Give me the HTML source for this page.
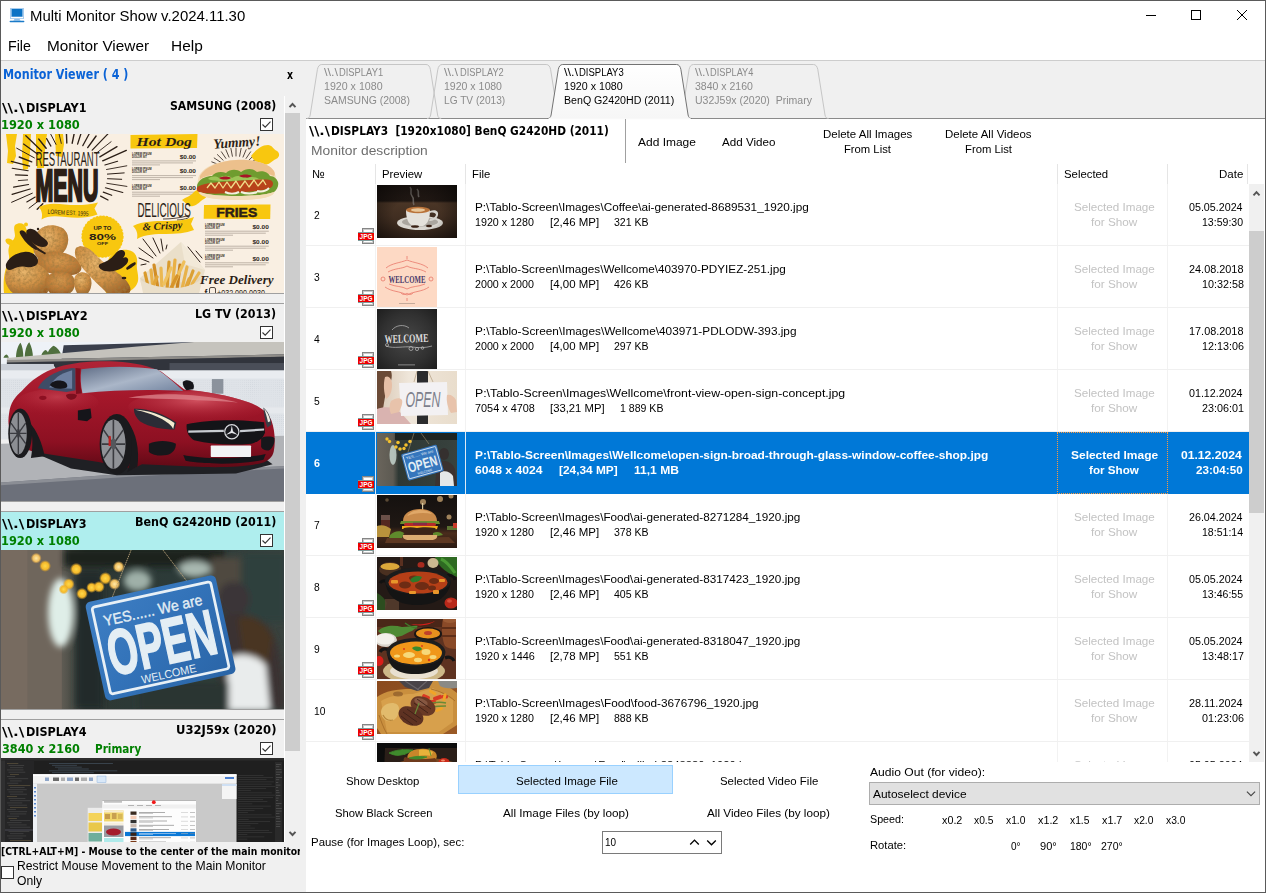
<!DOCTYPE html>
<html lang="en"><head><meta charset="utf-8"><title>Multi Monitor Show v.2024.11.30</title>
<style>
html,body{margin:0;padding:0}
body{width:1266px;height:893px;overflow:hidden;background:#fff;position:relative;font-family:"Liberation Sans",sans-serif;font-size:11.7px;color:#000}
section,header,nav,aside,main,footer,article{display:block;position:static}
div,svg{position:absolute;box-sizing:border-box}
.t{position:absolute;white-space:pre;line-height:20px;transform-origin:0 0;display:block}
.clip{overflow:hidden}
.cb{background:#fff;border:1px solid #333}
.hl{background:#f0f0f0}
</style></head><body>

<div style="left:0px;top:60px;width:1266px;height:833px;background:#f0f0f0"></div>
<div style="left:0px;top:60px;width:1266px;height:1px;background:#cdcdcd"></div>
<div style="left:306px;top:119px;width:960px;height:774px;background:#fff"></div>
<header>
<svg style="left:9px;top:7px" width="16" height="16" viewBox="0 0 16 16"><rect x="1" y="1" width="14" height="11" fill="#a9cdee"/><rect x="2.7" y="2" width="10.6" height="7.7" fill="#0b73c5"/><rect x="2" y="9.9" width="12" height="1.2" fill="#fff"/><path d="M5.5 12h5l1.2 1.8h-7.400z" fill="#8fc0ea"/><rect x="0.600" y="13.700" width="14.800" height="1.500" rx="0.700" fill="#1a7ac8"/></svg>
<span class="t" style="left:29.78px;top:6.00px;font-size:14.7px;transform:scaleX(1.0164);">Multi Monitor Show v.2024.11.30</span>
<svg style="left:1140px;top:5px" width="115" height="22" viewBox="1140 5 115 22" fill="none" stroke="#000" stroke-width="1"><path d="M1146 15.5h10"/><rect x="1191.5" y="10.5" width="9" height="9"/><path d="M1237 10l10 10M1247 10l-10 10"/></svg>
</header>
<nav><span class="t" style="left:7.63px;top:36.00px;font-size:14.7px;transform:scaleX(0.9690);">File</span>
<span class="t" style="left:46.56px;top:36.00px;font-size:14.7px;transform:scaleX(1.0445);">Monitor Viewer</span>
<span class="t" style="left:170.95px;top:36.00px;font-size:14.7px;transform:scaleX(1.0503);">Help</span></nav>
<aside>
<span class="t" style="left:2.52px;top:64.00px;font-size:14px;font-weight:bold;font-family:'DejaVu Sans', 'Liberation Sans', sans-serif;font-stretch:condensed;color:#0b63d6;transform:scaleX(0.8840);">Monitor Viewer ( 4 )</span>
<span class="t" style="left:286.50px;top:65.00px;font-size:13px;font-weight:bold;font-family:'DejaVu Sans', 'Liberation Sans', sans-serif;font-stretch:condensed;transform:scaleX(0.8000);">x</span>
<div style="left:284px;top:96px;width:1px;height:746px;background:#fff"></div>
<div style="left:285px;top:96px;width:15px;height:746px;background:#f0f0f0"></div>
<div style="left:285px;top:113px;width:15px;height:638px;background:#cdcdcd"></div>
<svg style="left:285px;top:96px" width="15" height="17" viewBox="285 96 15 17"><path d="M289.5 107.2l3-3.2l3 3.2" fill="none" stroke="#555" stroke-width="1.9"/></svg>
<svg style="left:285px;top:825px" width="15" height="17" viewBox="285 825 15 17"><path d="M289.5 831.8l3 3.200l3-3.200" fill="none" stroke="#555" stroke-width="1.9"/></svg>
<div class="clip" style="left:0;top:96px;width:284px;height:746px">
<section>
<div style="left:0px;top:-1px;width:284px;height:199px;border-top:1px solid #a0a0a0;border-bottom:1px solid #a0a0a0;background:#f0f0f0"></div>
<svg style="left:1px;top:38px" width="283" height="159" viewBox="0 0 283 159" preserveAspectRatio="none"><rect width="283" height="159" fill="#f9efe2"/><g fill="#f8c70f"><path d="M5 0h11l-2 12l1 10l-3 8l-6-1l1-12z"/><path d="M22 0h8l-1 18l-2 17l-5 1l-1-14z"/><path d="M35 0h11l-2 14l-1 20h-7l-1-16z"/><path d="M54 0h8l1 10l-2 13l-6-1z"/></g><g stroke="#2b1e16" stroke-linecap="round" fill="none"><path d="M106.5 44.7L120.7 45.3" stroke-width="1"/><path d="M105.8 49.3L125.9 52.4" stroke-width="0.9"/><path d="M104.4 53.8L121.8 58.5" stroke-width="1.1"/><path d="M102.3 58.1L110.7 61.3" stroke-width="1.2"/><path d="M99.6 62.1L107 66" stroke-width="1.2"/><path d="M41.8 69.8L36.2 75.3" stroke-width="1.4"/><path d="M37.8 66.7L28 74.2" stroke-width="1"/><path d="M34.2 63.1L25.8 67.9" stroke-width="1.1"/><path d="M31.3 59.2L10.6 68.3" stroke-width="1"/><path d="M29.1 55L11.1 60.4" stroke-width="1.3"/><path d="M27.5 50.5L12.6 53.2" stroke-width="1.2"/><path d="M26.6 45.9L17.3 46.6" stroke-width="0.9"/><path d="M26.5 41.3L14.5 40.8" stroke-width="1.3"/><path d="M27.2 36.7L11.2 34.3" stroke-width="1.1"/><path d="M28.6 32.2L10.3 27.3" stroke-width="1.2"/><path d="M30.7 27.9L18.2 23" stroke-width="1.4"/><path d="M33.4 23.9L15.7 14.2" stroke-width="1"/><path d="M36.8 20.3L22.6 10" stroke-width="1.2"/><path d="M40.7 17L24.8 1.7" stroke-width="1.3"/><path d="M45.1 14.3L37.8 5.1" stroke-width="1.5"/><path d="M49.9 12.1L45.6 4.6" stroke-width="1.2"/><path d="M55 10.4L48.6 -2" stroke-width="1"/><path d="M60.3 9.4L57.6 -2" stroke-width="0.9"/><path d="M65.8 9L65.4 -2" stroke-width="1.4"/><path d="M71.2 9.2L73.5 -2" stroke-width="1.4"/><path d="M76.6 10.1L80.1 -0.8" stroke-width="1.3"/><path d="M81.8 11.6L89.2 -2" stroke-width="1.2"/><path d="M86.7 13.6L95.1 2" stroke-width="1.4"/><path d="M91.2 16.2L107.2 -0.4" stroke-width="1.2"/><path d="M95.2 19.3L110.1 7.7" stroke-width="0.9"/><path d="M98.8 22.9L116 12.6" stroke-width="1.3"/><path d="M101.7 26.8L125.3 16.4" stroke-width="1.4"/><path d="M103.9 31L116.6 27.2" stroke-width="1.1"/><path d="M105.5 35.5L125.8 31.8" stroke-width="0.9"/><path d="M106.4 40.1L123.2 38.9" stroke-width="1"/></g><g font-family="Liberation Sans, sans-serif" fill="#2b1e16"><text transform="translate(34.5 31.8) scale(1 1.75)" font-size="11.8" textLength="64" lengthAdjust="spacingAndGlyphs">RESTAURANT</text><text transform="translate(34.6 67.3) scale(1 2.05)" font-size="21.8" font-weight="bold" stroke="#2b1e16" stroke-width="1.3" textLength="62.8" lengthAdjust="spacingAndGlyphs">MENU</text></g><path d="M38 73c8-4 16-3.5 26-2.5s22 1 33-2l-3.5 6l3 6c-10 4-22 3.5-32 2.5s-18-1.5-24 2.5c1-4 1-8-2.5-12.5z" fill="#f8c70f"/><text x="46.5" y="80.8" font-family="Liberation Sans, sans-serif" font-size="6.2" fill="#2b1e16" textLength="41" lengthAdjust="spacingAndGlyphs" transform="rotate(3 67 79)">LOREM EST. 1995</text><g fill="#f8c70f"><path d="M14 91c4-3 10-2 11 3c1 5 8 8 9 16c1 9-4 14-8 22c-3 7 1 14 2 27h-25c-1-10 0-22 4-30c3-6-1-10 1-16c1-5 5-6 6-11c0-4-2-8 0-11z"/><circle cx="25" cy="90.5" r="2"/><ellipse cx="9" cy="108" rx="5" ry="3" transform="rotate(30 9 108)"/><path d="M108 124c4-6 12-9 19-8c7 1 10 7 9 14c-1 6 2 10 1 17c-1 5-5 9-12 12h-20c-3-9-2-25 3-35z"/><circle cx="101.5" cy="102.6" r="20.6"/></g><circle cx="101.5" cy="102.6" r="20.3" fill="none" stroke="#f8c70f" stroke-width="1.6" stroke-dasharray="2.2 1.2"/><g font-family="Liberation Sans, sans-serif" font-weight="bold" fill="#2b1e16" text-anchor="middle"><text x="101.5" y="96" font-size="4.6" textLength="18" lengthAdjust="spacingAndGlyphs">UP TO</text><text x="101.5" y="106" font-size="9.6" textLength="27" lengthAdjust="spacingAndGlyphs">80%</text><text x="101.5" y="111.4" font-size="4.2" textLength="11" lengthAdjust="spacingAndGlyphs">OFF</text></g><defs><radialGradient id="ck" cx="0.4" cy="0.35" r="0.8"><stop offset="0" stop-color="#e8b56c"/><stop offset="0.55" stop-color="#cf8f45"/><stop offset="1" stop-color="#955a24"/></radialGradient><radialGradient id="ck2" cx="0.5" cy="0.4" r="0.8"><stop offset="0" stop-color="#d99a50"/><stop offset="0.6" stop-color="#b87634"/><stop offset="1" stop-color="#7e4a1e"/></radialGradient><filter id="ckf" x="0" y="0" width="1" height="1"><feTurbulence type="fractalNoise" baseFrequency="0.35" numOctaves="3" seed="4" result="n"/><feColorMatrix in="n" type="matrix" values="0 0 0 0 0.35  0 0 0 0 0.2  0 0 0 0 0.05  1.6 0 0 0 -0.55" result="d"/><feComposite in="d" in2="SourceGraphic" operator="in" result="dd"/><feMerge><feMergeNode in="SourceGraphic"/><feMergeNode in="dd"/></feMerge></filter></defs><g filter="url(#ckf)"><path d="M38 96c5-5 14-6 21-3c6 2 9 8 8 15c-1 7-5 12-11 15c-6 3-14 5-19 1c-5-4-6-12-4-18c1-4 2-7 5-10z" fill="url(#ck)"/><path d="M40 121c8-5 20-4 29 0c7 3 13 9 11 15c-2 5-12 6-21 5c-8-1-18-3-22-8c-3-4-1-9 3-12z" fill="url(#ck2)"/><path d="M75 114c5-4 12-1 17 4c6 6 14 14 22 19c7 5 13 10 15 16c1 3 0 5-1 6h-22c-6-6-14-13-21-21c-6-7-14-16-10-24z" fill="url(#ck)"/><path d="M8 133c6-6 17-7 26-4c8 3 15 9 16 17c0 5-2 10-4 13h-34c-5-4-8-10-8-16c0-4 1-7 4-10z" fill="url(#ck)"/><path d="M48 141c6-4 15-4 21-1c5 3 6 9 4 14c-1 2-2 4-4 5h-20c-3-3-5-7-5-11c0-3 1-5 4-7z" fill="url(#ck2)"/><path d="M76 140c4-3 9-2 12 1c3 4 3 10 1 15l-2 3h-11c-2-4-3-8-3-12c0-3 1-5 3-7z" fill="url(#ck)"/></g><g fill="#2b1e16"><path d="M19 97c3-2 6 1 8 5c3 5 7 9 11 13l-3 1c-6-3-11-8-14-13c-2-3-3-5-2-6z"/><path d="M26 96c4-3 9 0 12 4c3 4 8 5 9 9c0 4-5 5-10 3c-5-2-9-6-11-10c-1-3-1-5 0-6z"/><path d="M5 130c3-7 10-11 18-12c8-1 14 4 14 9c0 5-6 7-12 6c-5-1-9 0-13 2c-4 2-8 1-7-5z"/><path d="M37 114l8 5l-1 1.5l-8-4.5z"/><circle cx="37" cy="95" r="1.2"/><path d="M99 130c6-2 11-5 15-10c3-4 7-5 9-3c2 2 1 5-1 7c2-1 4-1 5 1c1 3-2 6-6 9c-5 3-12 4-17 3c-5-1-8-5-5-7z"/><path d="M125 134c3-3 6-5 9-6c1 1 1 2 0 3c-3 2-5 4-8 5z"/><ellipse cx="123" cy="144" rx="2.4" ry="1.2"/></g><path d="M129.5 1l67-1l-0.5 14l-66.5 0.5z" fill="#f8c70f"/><text x="135.5" y="11.8" font-family="Liberation Serif, serif" font-style="italic" font-weight="bold" font-size="13.5" fill="#2b1e16" textLength="55.5" lengthAdjust="spacingAndGlyphs">Hot Dog</text><text x="131" y="21.2" font-family="Liberation Sans, sans-serif" font-weight="bold" font-size="3" fill="#2b1e16" textLength="19.5" lengthAdjust="spacingAndGlyphs">LOREM IPSUM</text><text x="131" y="24.2" font-family="Liberation Sans, sans-serif" font-weight="bold" font-size="3" fill="#2b1e16" textLength="15" lengthAdjust="spacingAndGlyphs">DOLOR SIT</text><text x="195" y="24.7" font-family="Liberation Sans, sans-serif" font-weight="bold" font-size="5.6" fill="#2b1e16" text-anchor="end" textLength="16.3" lengthAdjust="spacingAndGlyphs">$0.00</text><path d="M131 26.9h64M131 28.9h61M131 30.9h28" stroke="#b9aea2" stroke-width="0.9" fill="none"/><text x="131" y="36" font-family="Liberation Sans, sans-serif" font-weight="bold" font-size="3" fill="#2b1e16" textLength="19.5" lengthAdjust="spacingAndGlyphs">LOREM IPSUM</text><text x="131" y="39" font-family="Liberation Sans, sans-serif" font-weight="bold" font-size="3" fill="#2b1e16" textLength="15" lengthAdjust="spacingAndGlyphs">DOLOR SIT</text><text x="195" y="39.4" font-family="Liberation Sans, sans-serif" font-weight="bold" font-size="5.6" fill="#2b1e16" text-anchor="end" textLength="16.3" lengthAdjust="spacingAndGlyphs">$0.00</text><path d="M131 41.6h64M131 43.6h61M131 45.6h28" stroke="#b9aea2" stroke-width="0.9" fill="none"/><text x="131" y="52.6" font-family="Liberation Sans, sans-serif" font-weight="bold" font-size="3" fill="#2b1e16" textLength="19.5" lengthAdjust="spacingAndGlyphs">LOREM IPSUM</text><text x="131" y="55.6" font-family="Liberation Sans, sans-serif" font-weight="bold" font-size="3" fill="#2b1e16" textLength="15" lengthAdjust="spacingAndGlyphs">DOLOR SIT</text><text x="195" y="56" font-family="Liberation Sans, sans-serif" font-weight="bold" font-size="5.6" fill="#2b1e16" text-anchor="end" textLength="16.3" lengthAdjust="spacingAndGlyphs">$0.00</text><path d="M131 58.2h64M131 60.2h61M131 62.2h28" stroke="#b9aea2" stroke-width="0.9" fill="none"/><text x="204" y="91.6" font-family="Liberation Sans, sans-serif" font-weight="bold" font-size="3" fill="#2b1e16" textLength="19.5" lengthAdjust="spacingAndGlyphs">LOREM IPSUM</text><text x="204" y="94.6" font-family="Liberation Sans, sans-serif" font-weight="bold" font-size="3" fill="#2b1e16" textLength="15" lengthAdjust="spacingAndGlyphs">DOLOR SIT</text><text x="267.8" y="95" font-family="Liberation Sans, sans-serif" font-weight="bold" font-size="5.6" fill="#2b1e16" text-anchor="end" textLength="16.3" lengthAdjust="spacingAndGlyphs">$0.00</text><path d="M204 97.2h63.8M204 99.2h60.8M204 101.2h28" stroke="#b9aea2" stroke-width="0.9" fill="none"/><text x="204" y="106.6" font-family="Liberation Sans, sans-serif" font-weight="bold" font-size="3" fill="#2b1e16" textLength="19.5" lengthAdjust="spacingAndGlyphs">LOREM IPSUM</text><text x="204" y="109.6" font-family="Liberation Sans, sans-serif" font-weight="bold" font-size="3" fill="#2b1e16" textLength="15" lengthAdjust="spacingAndGlyphs">DOLOR SIT</text><text x="267.8" y="110" font-family="Liberation Sans, sans-serif" font-weight="bold" font-size="5.6" fill="#2b1e16" text-anchor="end" textLength="16.3" lengthAdjust="spacingAndGlyphs">$0.00</text><path d="M204 112.2h63.8M204 114.2h60.8M204 116.2h28" stroke="#b9aea2" stroke-width="0.9" fill="none"/><text x="204" y="123.2" font-family="Liberation Sans, sans-serif" font-weight="bold" font-size="3" fill="#2b1e16" textLength="19.5" lengthAdjust="spacingAndGlyphs">LOREM IPSUM</text><text x="204" y="126.2" font-family="Liberation Sans, sans-serif" font-weight="bold" font-size="3" fill="#2b1e16" textLength="15" lengthAdjust="spacingAndGlyphs">DOLOR SIT</text><text x="267.8" y="126.6" font-family="Liberation Sans, sans-serif" font-weight="bold" font-size="5.6" fill="#2b1e16" text-anchor="end" textLength="16.3" lengthAdjust="spacingAndGlyphs">$0.00</text><path d="M204 128.8h63.8M204 130.8h60.8M204 132.8h28" stroke="#b9aea2" stroke-width="0.9" fill="none"/><text x="212.5" y="13" font-family="Liberation Serif, serif" font-style="italic" font-weight="bold" font-size="14" fill="#2b1e16" textLength="47" lengthAdjust="spacingAndGlyphs" transform="rotate(-4 236 10)">Yummy!</text><g stroke="#2b1e16" stroke-width="0.8" stroke-linecap="round"><path d="M218.3 30.8L210.8 27.9"/><path d="M219.9 28.4L213.2 24"/><path d="M222.1 26.2L216.4 20.6"/><path d="M224.9 24.4L220.4 17.8"/><path d="M228 23.1L224.9 15.7"/><path d="M231.4 22.3L229.9 14.4"/><path d="M235 22L235 14"/><path d="M238.6 22.3L240.1 14.4"/><path d="M242 23.1L245.1 15.7"/><path d="M245.1 24.4L249.6 17.8"/><path d="M247.9 26.2L253.6 20.6"/><path d="M250.1 28.4L256.8 24"/><path d="M251.7 30.8L259.2 27.9"/></g><path d="M250 22c4-5 10-11 17-11c4 0 5 4 9 6c3 2 3 6-1 8c-4 2-7 6-12 6c-5 0-10-4-13-9z" fill="#f8c70f"/><path d="M181 66c4-3 9-4 12-8c3-3 8-4 12-2c3 2 2 7-2 9c-4 2-6 6-11 7c-4 1-6-2-11-6z" fill="#f8c70f"/><path d="M197 46c1-11 17-19 38-20c21-1 37 5 39 14c2 7 2 14-1 19c-3 5-20 7-38 7c-18 0-34-2-37-7c-2-4-2-8-1-13z" fill="#f3dcb8"/><path d="M199 42c5-9 19-15 36-16c19-1 34 4 38 11c1 2 1 4 0 5c-8-3-22-5-38-4c-16 1-29 3-36 7z" fill="#ecc08c"/><path d="M197 49c3-5 9-7 14-7c3-4 9-5 14-3c4-4 11-4 15-1c5-4 12-4 16 0c5-2 11 0 13 4c4 0 7 3 8 6c1 4-1 8-4 10c-8 3-22 4-38 4c-16 0-30-1-36-4c-3-2-4-6-2-9z" fill="#6f9c2f"/><path d="M207 45c3-3 8-3 11-1c4-3 10-3 13 0c5-3 11-3 15 0c4-2 9-1 12 1c3 0 6 1 8 3c-10-2-24-2-36-1c-10 0-18 0-23-2z" fill="#9cc456"/><path d="M218 44c4-2 9-2 12 0c-3 2-9 2-12 0zM238 42c4-2 9-2 13 0c-4 2-9 2-13 0z" fill="#a81426"/><path d="M198 52c6-3 20-4 37-5c15-1 28-2 34-1c4 1 4 6 0 8c-8 3-21 4-37 5c-15 1-28 1-34-1c-3-1-3-5 0-6z" fill="#b8431a"/><path d="M206 54l4-5l4 5l4-6l4 6l4-6l4 6l5-7l4 7l5-7l4 6l5-7l4 6l5-6l3 5" fill="none" stroke="#f1de8a" stroke-width="1.3" stroke-linejoin="round"/><path d="M224 58c4 2 10 2 14 0M240 58c5 2 12 2 16 0M256 57c4 1 9 0 12-3" fill="none" stroke="#f4f0e0" stroke-width="2"/><path d="M199 58c8 3 22 4 37 4c15 0 29-1 37-4c0 5-15 8-37 8c-22 0-37-3-37-8z" fill="#f3dcb8"/><text transform="translate(136.4 83.4) scale(1 1.55)" font-family="Liberation Sans, sans-serif" font-size="12.6" fill="#2b1e16" textLength="53.4" lengthAdjust="spacingAndGlyphs">DELICIOUS</text><path d="M162 85c8 0 16-1 24-3c2-0.5 3 1 1 2c-3 1-7 2-11 2" fill="none" stroke="#2b1e16" stroke-width="0.8"/><path d="M132 92c10-5 22-5 34-5c10 0 19-1 27-4l-3 7l3 6c-8 3-18 4-28 4c-10 0-20 0-29 5c1-5 0-9-4-13z" fill="#f8c70f"/><text x="141.5" y="95.5" font-family="Liberation Serif, serif" font-style="italic" font-weight="bold" font-size="10.5" fill="#2b1e16" textLength="40" lengthAdjust="spacingAndGlyphs" transform="rotate(-3 160 93)">&amp; Crispy</text><path d="M203 71l66.5-0.5l-0.3 14.5l-66.5-0.3z" fill="#f8c70f"/><text x="215.2" y="82.7" font-family="Liberation Sans, sans-serif" font-weight="bold" font-size="13.2" fill="#2b1e16" stroke="#2b1e16" stroke-width="0.5" textLength="41" lengthAdjust="spacingAndGlyphs">FRIES</text><g stroke="#2b1e16" stroke-width="1" stroke-linecap="round"><path d="M142 105L155 122"/><path d="M152 104L159 119"/><path d="M160 105L162 117"/><path d="M166 111L165 115"/><path d="M138 114L152 124"/><path d="M138 124L148 128"/><path d="M140 131L145 130"/><path d="M187 113L199 128"/><path d="M195 117L201 124"/></g><path d="M180 108l24 28l-6 23h-56l-3-15z" fill="#eadfca"/><path d="M180 108l24 28l-20 -6z" fill="#f2e9d8"/><path d="M139 144l8 15h48l5-17c-12 8-38 10-61 2z" fill="#e4d6bc"/><g stroke-linecap="round" stroke-width="3.2"><path d="M147 152L144 139" stroke="#d99a2c"/><path d="M152 154L150 136" stroke="#e8b24a"/><path d="M157 155L153 131" stroke="#d28e26"/><path d="M161 156L160 134" stroke="#ebb851"/><path d="M166 156L168 128" stroke="#d99a2c"/><path d="M171 157L174 126" stroke="#e9b046"/><path d="M176 156L179 131" stroke="#c9821f"/><path d="M181 155L186 133" stroke="#e8b24a"/><path d="M186 153L192 137" stroke="#dba033"/><path d="M191 150L198 139" stroke="#e9b44c"/><path d="M163 150L170 134" stroke="#f0c260"/><path d="M173 150L183 128" stroke="#efbf5a"/><path d="M150 157L156 143" stroke="#e2a63a"/><path d="M168 158L176 142" stroke="#d6932a"/><path d="M183 158L188 145" stroke="#e2a63a"/></g><path d="M139 146c10 5 22 8 34 8c10 0 20-3 28-9l-3 14h-55z" fill="#eadfca"/><text x="199" y="150" font-family="Liberation Serif, serif" font-style="italic" font-weight="bold" font-size="13" fill="#2b1e16" textLength="73.5" lengthAdjust="spacingAndGlyphs">Free Delivery</text><text x="216" y="162" font-family="Liberation Sans, sans-serif" font-size="8.5" fill="#2b1e16" textLength="48" lengthAdjust="spacingAndGlyphs">+032 090 0030</text><text x="203.5" y="161.5" font-family="Liberation Sans, sans-serif" font-weight="bold" font-size="8.5" fill="#2b1e16">f</text><rect x="208.5" y="153.5" width="6" height="7" rx="1.5" fill="none" stroke="#2b1e16" stroke-width="0.8"/></svg>
<svg style="left:260px;top:22px" width="13" height="13" viewBox="0 0 13 13"><rect x="0.5" y="0.5" width="12" height="12" fill="#fff" stroke="#333"/><path d="M2.5 6.5l2.7 2.7l5.3-5.6" fill="none" stroke="#333" stroke-width="1.1"/></svg>
</section>
<section>
<div style="left:0px;top:207px;width:284px;height:199px;border-top:1px solid #a0a0a0;border-bottom:1px solid #a0a0a0;background:#f0f0f0"></div>
<svg style="left:1px;top:246px" width="283" height="159" viewBox="0 0 283 159" preserveAspectRatio="none"><defs><linearGradient id="cg" x1="0" y1="0" x2="0" y2="1"><stop offset="0" stop-color="#b9babd"/><stop offset="0.45" stop-color="#a6a8ad"/><stop offset="0.5" stop-color="#7b7f88"/><stop offset="1" stop-color="#666a74"/></linearGradient><linearGradient id="cb" x1="0" y1="0" x2="0" y2="1"><stop offset="0" stop-color="#b02436"/><stop offset="0.35" stop-color="#a3172a"/><stop offset="0.75" stop-color="#8d1022"/><stop offset="1" stop-color="#5e0915"/></linearGradient><linearGradient id="cw" x1="0" y1="0" x2="1" y2="1"><stop offset="0" stop-color="#5f6d86"/><stop offset="0.5" stop-color="#aab6c8"/><stop offset="1" stop-color="#6d7f9c"/></linearGradient><radialGradient id="ch" cx="0.5" cy="0.3" r="0.7"><stop offset="0" stop-color="#d0505e"/><stop offset="1" stop-color="#a3172a" stop-opacity="0"/></radialGradient><pattern id="dots" width="9" height="9" patternUnits="userSpaceOnUse"><circle cx="4.5" cy="4.5" r="1.3" fill="#c6ccd4"/></pattern><clipPath id="cbody"><path d="M40 335c5-40 25-70 55-95c40-45 90-85 160-105c70-22 170-28 250-24c80 4 150 20 200 45c40 30 70 55 100 78c90 8 190 25 280 55c50 18 85 45 100 80c15 40 18 95 10 135c-5 25-25 40-45 48c-60 18-150 22-260 20l-270-12l-40 20l-150-30l-260-40c-60-10-110-40-125-90c-10-30-10-55-5-85z"/></clipPath></defs><g transform="scale(0.22907) translate(-4.37 -26.2)"><rect x="0" y="20" width="1250" height="200" fill="#eef2f7"/><g fill="#4f6f3e"><path d="M70 95c0-25 8-55 20-65c8 15 12 40 12 65zM108 95c0-28 8-58 20-68c10 18 16 45 16 68zM180 85c5-14 12-22 20-24c8 4 12 14 14 24zM205 85c4-20 16-36 30-42c16 8 28 24 34 42zM15 95c4-10 10-14 14-14c4 2 8 8 10 14z"/></g><path d="M278 40l580-14h400v140h-1000z" fill="#3a3f4c"/><path d="M30 96l250-22l320-28l250-20h400v54l-1220 24z" fill="#c5c3bd"/><path d="M30 104l1220-24v10l-1220 30z" fill="#8e8c88"/><path d="M30 116l1220-26v75h-1220z" fill="#31343c"/><rect x="740" y="118" width="510" height="42" fill="#4a4e58"/><path d="M0 122h230l20 30h1000v300h-1250z" fill="#dfe3e8"/><rect x="0" y="122" width="235" height="30" fill="#c9ced6"/><rect x="0" y="150" width="1250" height="36" fill="#e9ecf0"/><rect x="0" y="192" width="1250" height="120" fill="url(#dots)"/><rect x="0" y="340" width="1250" height="90" fill="url(#dots)"/><rect x="0" y="312" width="1250" height="26" fill="#e6e9ed"/><rect x="925" y="188" width="50" height="64" fill="#8b929c"/><path d="M0 470l1250-35v300h-1250z" fill="#b1b3b7"/><path d="M0 640l600-42l650-30v170h-1250z" fill="#6c707a"/><path d="M0 640l600-42l650-30v10l-650 34l-600 40z" fill="#8b8e95"/><path d="M150 510l1000 20l40 30l-160 40l-520 8l-200-30z" fill="#1f2024"/><path d="M40 335c5-40 25-70 55-95c40-45 90-85 160-105c70-22 170-28 250-24c80 4 150 20 200 45c40 30 70 55 100 78c90 8 190 25 280 55c50 18 85 45 100 80c15 40 18 95 10 135c-5 25-25 40-45 48c-60 18-150 22-260 20l-270-12l-40 20l-150-30l-260-40c-60-10-110-40-125-90c-10-30-10-55-5-85z" fill="url(#cb)"/><g clip-path="url(#cbody)"><ellipse cx="860" cy="310" rx="300" ry="70" fill="url(#ch)"/><ellipse cx="250" cy="290" rx="180" ry="60" fill="url(#ch)" opacity="0.6"/><path d="M560 270c120-25 300-20 480 20c-150-10-320-15-480-20z" fill="#e08a92" opacity="0.7"/></g><path d="M165 228c20-40 70-75 150-88l15 2v95l-40 8z" fill="#3e4c66"/><path d="M215 225c15-35 45-60 100-75v80z" fill="#6c7fa0"/><path d="M355 145c100-15 230-15 330 0c45 30 85 65 115 95c-140-8-300-5-440 10c-8-35-10-70-5-105z" fill="url(#cw)"/><path d="M330 140l22 2c-5 38-3 72 5 108l-25 3z" fill="#7c0f1e"/><path d="M218 215c5-15 25-22 50-20c20 2 28 15 25 28c-10 10-55 12-75 -8z" fill="#15151a"/><path d="M288 258c10-8 35-8 48 0c-2 15-15 22-28 20c-12-2-20-10-20-20z" fill="#7c0f1e"/><path d="M798 200c10-10 30-10 42 2c8 10 8 22 4 30l-30 5c-10-10-18-22-16-37z" fill="#15151a"/><path d="M340 325l55-8l5 40l-20 15l-40-5z" fill="#15151a"/><ellipse cx="187" cy="270" rx="16" ry="9" fill="#8d1022"/><path d="M585 318c50-5 130 20 185 60l-8 30c-50 0-110-10-150-35c-18-15-28-35-27-55z" fill="#2a2c36"/><path d="M590 322c50 0 120 22 172 58l-6 26c-10-30-90-70-166-84z" fill="#f3ead0"/><path d="M1150 312c18 15 32 40 35 75l-18 12c-10-25-15-55-17-87z" fill="#3a3c46"/><path d="M1152 316c14 14 24 32 28 56l-10 5c-4-22-10-42-18-61z" fill="#f0ece0"/><path d="M815 385c100-22 240-22 338-8l4 45c-10 25-30 40-60 48c-80 8-170 5-250-15c-25-15-35-40-32-70z" fill="#141418"/><path d="M822 412l155-3v10l-155 3zM1048 410l105-6v9l-105 7z" fill="#c9ccd2"/><circle cx="1012" cy="418" r="31" fill="#1b1b20" stroke="#d8dade" stroke-width="5"/><path d="M1012 390l5 26l22 16l-27-8l-27 8l22-16z" fill="#e4e6ea"/><path d="M650 470c35-15 85-15 118 0c0 25-15 42-40 50c-30 5-65 0-78-15z" fill="#17171b"/><path d="M1140 445c20-8 45-8 58 0c2 25-8 45-25 55c-15 2-28-5-33-15z" fill="#17171b"/><path d="M800 520c80 18 250 20 360-5l-10 25c-90 22-250 22-340 5z" fill="#15151a"/><rect x="920" y="478" width="176" height="50" rx="3" fill="#f2f3f5"/><ellipse cx="88" cy="425" rx="52" ry="108" fill="#1a1a1d"/><ellipse cx="80" cy="425" rx="37" ry="92" fill="#8c8e93"/><ellipse cx="80" cy="425" rx="9" ry="20" fill="#55575c"/><g stroke="#3a3b40" stroke-width="6"><path d="M80 335v180M48 380l64 90M48 470l64-90M44 425h72"/></g><path d="M130 380c30 30 55 90 65 145l-60 8c10-50 8-105-5-153z" fill="#1a1a1d"/><ellipse cx="510" cy="472" rx="75" ry="132" fill="#1a1a1d"/><ellipse cx="495" cy="472" rx="53" ry="108" fill="#909297"/><g stroke="#3a3b40" stroke-width="7"><path d="M495 366v212M452 410l86 124M452 534l86-124M444 472h102"/></g><ellipse cx="495" cy="472" rx="12" ry="24" fill="#55575c"/><path d="M474 440c4-6 8-6 10 0v40h-10z" fill="#c02020"/><path d="M560 380c35 40 50 120 40 190l-45 25c25-60 25-150 5-215z" fill="#1a1a1d"/></g></svg>
<svg style="left:260px;top:230px" width="13" height="13" viewBox="0 0 13 13"><rect x="0.5" y="0.5" width="12" height="12" fill="#fff" stroke="#333"/><path d="M2.5 6.5l2.7 2.7l5.3-5.6" fill="none" stroke="#333" stroke-width="1.1"/></svg>
</section>
<section>
<div style="left:0px;top:415px;width:284px;height:199px;border-top:1px solid #a0a0a0;border-bottom:1px solid #a0a0a0;background:#afeeee"></div>
<svg style="left:1px;top:454px" width="283" height="159" viewBox="0 0 283 159" preserveAspectRatio="none"><defs><linearGradient id="ob" x1="0" y1="0" x2="1" y2="0"><stop offset="0" stop-color="#6b655c"/><stop offset="0.22" stop-color="#5d5a52"/><stop offset="0.3" stop-color="#2e3834"/><stop offset="0.6" stop-color="#2c3a38"/><stop offset="1" stop-color="#39423e"/></linearGradient><radialGradient id="bk"><stop offset="0" stop-color="#ffd84a"/><stop offset="0.6" stop-color="#f5b92a"/><stop offset="1" stop-color="#e0a020" stop-opacity="0"/></radialGradient><radialGradient id="bk2"><stop offset="0" stop-color="#ffe9a8"/><stop offset="0.6" stop-color="#f0c060"/><stop offset="1" stop-color="#e0a040" stop-opacity="0"/></radialGradient><radialGradient id="wl"><stop offset="0" stop-color="#e8f2ee"/><stop offset="0.5" stop-color="#b6c8c2" stop-opacity="0.8"/><stop offset="1" stop-color="#6a807a" stop-opacity="0"/></radialGradient><filter id="bl" x="-20%" y="-20%" width="140%" height="140%"><feGaussianBlur stdDeviation="14"/></filter><linearGradient id="sg" x1="0" y1="0" x2="1" y2="1"><stop offset="0" stop-color="#3f7fc4"/><stop offset="0.5" stop-color="#3272b8"/><stop offset="1" stop-color="#2a64a6"/></linearGradient></defs><g transform="scale(0.22907) translate(-4.37 -26.2)"><rect x="0" y="20" width="1250" height="710" fill="url(#ob)"/><rect x="0" y="20" width="270" height="710" fill="#6f665c"/><rect x="0" y="20" width="120" height="710" fill="#7a6e62" opacity="0.7"/><g filter="url(#bl)"><rect x="280" y="20" width="700" height="80" fill="#1a211f"/><rect x="330" y="120" width="120" height="600" fill="#222c2a"/><ellipse cx="265" cy="300" rx="55" ry="150" fill="#dfeee8"/><ellipse cx="600" cy="160" rx="60" ry="45" fill="#9fb0a8"/><ellipse cx="850" cy="110" rx="70" ry="35" fill="#a8b8b0"/><rect x="920" y="60" width="130" height="200" fill="#4f4a40"/><rect x="1060" y="40" width="190" height="300" fill="#2f3f3c"/><ellipse cx="1020" cy="240" rx="70" ry="75" fill="#3a3638"/><path d="M960 330c40-40 170-40 230 60c30 60 50 150 50 330h-280z" fill="#3b3230"/><path d="M1040 330c30-30 110-10 150 80l-20 120l-110-60z" fill="#4a3424"/><path d="M1000 500c40-30 120-20 160 30l20 200h-200z" fill="#e9ecec"/><rect x="600" y="600" width="400" height="130" fill="#2a3432"/></g><circle cx="158" cy="62" r="24" fill="url(#bk2)"/><circle cx="197" cy="96" r="26" fill="url(#bk)"/><circle cx="333" cy="110" r="28" fill="url(#bk)"/><circle cx="518" cy="100" r="26" fill="url(#bk2)"/><circle cx="460" cy="150" r="28" fill="url(#bk)"/><circle cx="300" cy="175" r="26" fill="url(#bk)"/><circle cx="278" cy="198" r="22" fill="url(#bk)"/><circle cx="400" cy="190" r="24" fill="url(#bk)"/><circle cx="432" cy="187" r="26" fill="url(#bk)"/><circle cx="358" cy="217" r="26" fill="url(#bk)"/><circle cx="500" cy="175" r="26" fill="url(#bk2)"/><path d="M572 27L482 252M712 27L820 168" stroke="#b9a27a" stroke-width="4" stroke-dasharray="6 3" fill="none"/><g transform="rotate(-12.3 701 410)"><rect x="410" y="190" width="582" height="440" rx="22" fill="url(#sg)"/><rect x="436" y="216" width="530" height="388" rx="12" fill="none" stroke="#e8f0f6" stroke-width="12"/><g font-family="Liberation Sans, sans-serif" fill="#e4eef4"><text x="474" y="308" font-size="66" stroke="#e4eef4" stroke-width="1.5" textLength="440" lengthAdjust="spacingAndGlyphs">YES...... We are</text><text transform="translate(462 528) scale(1 1.64)" font-size="170" font-weight="bold" stroke="#e4eef4" stroke-width="5" textLength="478" lengthAdjust="spacingAndGlyphs">OPEN</text><text x="580" y="588" font-size="50" textLength="245" lengthAdjust="spacingAndGlyphs">WELCOME</text></g></g></g></svg>
<svg style="left:260px;top:438px" width="13" height="13" viewBox="0 0 13 13"><rect x="0.5" y="0.5" width="12" height="12" fill="#fff" stroke="#333"/><path d="M2.5 6.5l2.7 2.7l5.3-5.6" fill="none" stroke="#333" stroke-width="1.1"/></svg>
</section>
<section>
<div style="left:0px;top:623px;width:284px;height:199px;border-top:1px solid #a0a0a0;border-bottom:1px solid #a0a0a0;background:#f0f0f0"></div>
<svg style="left:1px;top:662px" width="283" height="159" viewBox="0 0 283 159" preserveAspectRatio="none"><rect width="283" height="159" fill="#1f1f1f"/><rect width="283" height="2.5" fill="#2d2d2d"/><rect x="0" y="2.5" width="33" height="157" fill="#252526"/><rect x="0" y="2.5" width="4" height="157" fill="#303031"/><rect x="6" y="5" width="11.3" height="0.7" fill="#5e533e"/><rect x="7.5" y="7.2" width="15.6" height="0.7" fill="#474747"/><rect x="9" y="9.4" width="13.2" height="0.7" fill="#474747"/><rect x="6" y="11.6" width="16.5" height="0.7" fill="#474747"/><rect x="7.5" y="13.8" width="16.8" height="0.7" fill="#474747"/><rect x="9" y="16" width="8.9" height="0.7" fill="#5e533e"/><rect x="6" y="18.2" width="8.2" height="0.7" fill="#474747"/><rect x="7.5" y="20.4" width="19.7" height="0.7" fill="#474747"/><rect x="9" y="22.6" width="11.6" height="0.7" fill="#474747"/><rect x="6" y="24.8" width="11.3" height="0.7" fill="#474747"/><rect x="7.5" y="27" width="21.9" height="0.7" fill="#5e533e"/><rect x="9" y="29.2" width="14.6" height="0.7" fill="#474747"/><rect x="6" y="31.4" width="19.7" height="0.7" fill="#474747"/><rect x="7.5" y="33.6" width="14.7" height="0.7" fill="#474747"/><rect x="9" y="35.8" width="16.9" height="0.7" fill="#474747"/><rect x="6" y="38" width="10.1" height="0.7" fill="#5e533e"/><rect x="7.5" y="40.2" width="16.9" height="0.7" fill="#474747"/><rect x="9" y="42.4" width="20.2" height="0.7" fill="#474747"/><rect x="6" y="44.6" width="15.3" height="0.7" fill="#474747"/><rect x="7.5" y="46.8" width="18.4" height="0.7" fill="#474747"/><rect x="9" y="49" width="17.4" height="0.7" fill="#5e533e"/><rect x="6" y="51.2" width="8.9" height="0.7" fill="#474747"/><rect x="7.5" y="53.4" width="18.6" height="0.7" fill="#474747"/><rect x="9" y="55.6" width="16.3" height="0.7" fill="#474747"/><rect x="6" y="57.8" width="12.2" height="0.7" fill="#474747"/><rect x="7.5" y="60" width="8.4" height="0.7" fill="#5e533e"/><rect x="9" y="62.2" width="20.1" height="0.7" fill="#474747"/><rect x="6" y="64.4" width="14.6" height="0.7" fill="#474747"/><rect x="7.5" y="66.6" width="18.1" height="0.7" fill="#474747"/><rect x="9" y="68.8" width="20.3" height="0.7" fill="#474747"/><rect x="6" y="71" width="18" height="0.7" fill="#5e533e"/><rect x="7.5" y="73.2" width="20.9" height="0.7" fill="#474747"/><rect x="9" y="75.4" width="13.5" height="0.7" fill="#474747"/><rect x="6" y="77.6" width="19.2" height="0.7" fill="#474747"/><rect x="7.5" y="79.8" width="14.2" height="0.7" fill="#474747"/><rect x="9" y="82" width="21.1" height="0.7" fill="#5e533e"/><rect x="4" y="71" width="29" height="2" fill="#37373d"/><rect x="48" y="5" width="63.9" height="0.6" fill="#4a5a6a"/><rect x="51" y="6.9" width="24.9" height="0.6" fill="#4a5a6a"/><rect x="54" y="8.8" width="26.8" height="0.6" fill="#4a5a6a"/><rect x="57" y="10.7" width="30.8" height="0.6" fill="#4a5a6a"/><rect x="48" y="12.6" width="68.3" height="0.6" fill="#4a5a6a"/><rect x="51" y="14.5" width="41.8" height="0.6" fill="#4a5a6a"/><rect x="54" y="16.4" width="51.3" height="0.6" fill="#4a5a6a"/><rect x="57" y="18.3" width="35.1" height="0.6" fill="#4a5a6a"/><rect x="48" y="20.2" width="45.4" height="0.6" fill="#4a5a6a"/><rect x="51" y="22.1" width="39.3" height="0.6" fill="#4a5a6a"/><rect x="54" y="24" width="37.5" height="0.6" fill="#4a5a6a"/><rect x="57" y="25.9" width="49.3" height="0.6" fill="#4a5a6a"/><rect x="237" y="17" width="25.5" height="0.6" fill="#3c3c3c"/><rect x="237" y="19.2" width="35.1" height="0.6" fill="#3c3c3c"/><rect x="237" y="21.4" width="28.5" height="0.6" fill="#3c3c3c"/><rect x="237" y="23.6" width="35.9" height="0.6" fill="#3c3c3c"/><rect x="237" y="25.8" width="33.7" height="0.6" fill="#3c3c3c"/><rect x="237" y="28" width="37.7" height="0.6" fill="#3c3c3c"/><rect x="237" y="30.2" width="28.1" height="0.6" fill="#3c3c3c"/><rect x="237" y="32.4" width="12.9" height="0.6" fill="#3c3c3c"/><rect x="237" y="34.6" width="33.8" height="0.6" fill="#3c3c3c"/><rect x="237" y="36.8" width="36.9" height="0.6" fill="#3c3c3c"/><rect x="237" y="39" width="35.1" height="0.6" fill="#3c3c3c"/><rect x="237" y="41.2" width="25.1" height="0.6" fill="#3c3c3c"/><rect x="237" y="43.4" width="29.4" height="0.6" fill="#3c3c3c"/><rect x="237" y="45.6" width="14.3" height="0.6" fill="#3c3c3c"/><rect x="237" y="47.8" width="32.9" height="0.6" fill="#3c3c3c"/><rect x="237" y="50" width="25.2" height="0.6" fill="#3c3c3c"/><rect x="237" y="52.2" width="16.5" height="0.6" fill="#3c3c3c"/><rect x="237" y="54.4" width="9.9" height="0.6" fill="#3c3c3c"/><rect x="237" y="56.6" width="33.6" height="0.6" fill="#3c3c3c"/><rect x="237" y="58.8" width="37.7" height="0.6" fill="#3c3c3c"/><rect x="237" y="61" width="10.7" height="0.6" fill="#3c3c3c"/><rect x="237" y="63.2" width="32" height="0.6" fill="#3c3c3c"/><rect x="237" y="65.4" width="20.3" height="0.6" fill="#3c3c3c"/><rect x="237" y="67.6" width="12.5" height="0.6" fill="#3c3c3c"/><rect x="237" y="69.8" width="16.8" height="0.6" fill="#3c3c3c"/><rect x="237" y="72" width="31.1" height="0.6" fill="#3c3c3c"/><rect x="237" y="74.2" width="34.2" height="0.6" fill="#3c3c3c"/><rect x="237" y="76.4" width="9.3" height="0.6" fill="#3c3c3c"/><rect x="237" y="78.6" width="26.4" height="0.6" fill="#3c3c3c"/><rect x="237" y="80.8" width="9.3" height="0.6" fill="#3c3c3c"/><rect x="274" y="4" width="7" height="80" fill="#2a2a2a"/><rect x="275" y="6" width="4.9" height="0.5" fill="#666"/><rect x="275" y="8.6" width="3.3" height="0.5" fill="#666"/><rect x="275" y="11.2" width="5.5" height="0.5" fill="#666"/><rect x="275" y="13.8" width="5.9" height="0.5" fill="#666"/><rect x="275" y="16.4" width="4" height="0.5" fill="#666"/><rect x="275" y="19" width="6" height="0.5" fill="#666"/><rect x="275" y="21.6" width="3.2" height="0.5" fill="#666"/><rect x="275" y="24.2" width="2.3" height="0.5" fill="#666"/><rect x="275" y="26.8" width="4.4" height="0.5" fill="#666"/><rect x="275" y="29.4" width="2.1" height="0.5" fill="#666"/><rect x="275" y="32" width="2.8" height="0.5" fill="#666"/><rect x="275" y="34.6" width="3.6" height="0.5" fill="#666"/><rect x="275" y="37.2" width="4.4" height="0.5" fill="#666"/><rect x="275" y="39.8" width="2.6" height="0.5" fill="#666"/><rect x="275" y="42.4" width="2.2" height="0.5" fill="#666"/><rect x="275" y="45" width="5.5" height="0.5" fill="#666"/><rect x="275" y="47.6" width="3.3" height="0.5" fill="#666"/><rect x="275" y="50.2" width="5.8" height="0.5" fill="#666"/><rect x="275" y="52.8" width="5.6" height="0.5" fill="#666"/><rect x="275" y="55.4" width="3.5" height="0.5" fill="#666"/><rect x="275" y="58" width="3.8" height="0.5" fill="#666"/><rect x="275" y="60.6" width="4.1" height="0.5" fill="#666"/><rect x="275" y="63.2" width="4.6" height="0.5" fill="#666"/><rect x="275" y="65.8" width="4.4" height="0.5" fill="#666"/><rect x="275" y="68.4" width="4.2" height="0.5" fill="#666"/><rect x="32" y="16.3" width="203.5" height="143" fill="#c9c9c9"/><rect x="32" y="16.3" width="203.5" height="9.3" fill="#f3f3f3"/><rect x="32" y="16.3" width="203.5" height="1.6" fill="#fff"/><rect x="44" y="19.5" width="4" height="3.5" fill="#8fa6c8"/><rect x="52" y="19.5" width="6" height="3.5" fill="#6a6a6a"/><rect x="60" y="19.5" width="4" height="3.5" fill="#b0b0b0"/><rect x="66" y="19.5" width="6" height="3.5" fill="#8fa6c8"/><rect x="74" y="19.5" width="4" height="3.5" fill="#6a6a6a"/><rect x="80" y="19.5" width="6" height="3.5" fill="#b0b0b0"/><rect x="88" y="19.5" width="4" height="3.5" fill="#8fa6c8"/><rect x="96" y="19.5" width="6" height="3.5" fill="#6a6a6a"/><rect x="96" y="18" width="9" height="6.5" fill="#d9e8f8" stroke="#7aa7d8" stroke-width="0.4"/><rect x="224" y="19" width="9" height="2" fill="#4a7fd0"/><rect x="32" y="25.6" width="4" height="134" fill="#eef1f5"/><rect x="33" y="29" width="2" height="1.5" fill="#5a8ad0"/><rect x="33" y="33" width="2" height="1.5" fill="#5a8ad0"/><rect x="33" y="37" width="2" height="1.5" fill="#5a8ad0"/><rect x="33" y="41" width="2" height="1.5" fill="#5a8ad0"/><rect x="33" y="45" width="2" height="1.5" fill="#5a8ad0"/><rect x="33" y="49" width="2" height="1.5" fill="#5a8ad0"/><rect x="33" y="53" width="2" height="1.5" fill="#5a8ad0"/><rect x="33" y="57" width="2" height="1.5" fill="#5a8ad0"/><rect x="221" y="26" width="14.5" height="15" fill="#f4f4f4"/><rect x="221" y="26" width="14.5" height="2" fill="#cfe0f4"/><rect x="86.7" y="49.8" width="37.5" height="110" fill="#ececec"/><rect x="101.4" y="42.5" width="93.6" height="117" fill="#fdfdfd"/><rect x="101.4" y="42.5" width="93.6" height="0.5" fill="#888"/><rect x="103" y="43.6" width="18" height="0.7" fill="#666"/><circle cx="152.8" cy="44.2" r="1.9" fill="#f01818"/><rect x="101.4" y="46.5" width="93.6" height="4" fill="#f0f0f0"/><rect x="127" y="47.3" width="6" height="0.7" fill="#999"/><rect x="136" y="47.3" width="6" height="0.7" fill="#999"/><rect x="145" y="47.3" width="6" height="0.7" fill="#999"/><rect x="154" y="47.3" width="6" height="0.7" fill="#999"/><rect x="87.5" y="55" width="13.5" height="8" fill="#f4d35a"/><rect x="87.5" y="64.5" width="13.5" height="9" fill="#e9c84a"/><rect x="87.5" y="75" width="13.5" height="8.5" fill="#6fae9c"/><rect x="103" y="52.5" width="19.5" height="11" fill="#f0d56a"/><rect x="103" y="52.5" width="19.5" height="2" fill="#f7ecd0"/><rect x="104" y="56" width="5" height="5" fill="#c59a4a"/><rect x="111" y="55" width="4.5" height="6" fill="#c8a050"/><rect x="117" y="56" width="4.5" height="5" fill="#d8b858"/><rect x="103" y="64.5" width="19.5" height="3" fill="#f5efdf"/><rect x="103" y="67.5" width="19.5" height="11.5" fill="#9a9ca2"/><ellipse cx="112.5" cy="74" rx="7.5" ry="3.4" fill="#a51c2c"/><rect x="103" y="80" width="19.5" height="4" fill="#aeeaea"/><rect x="129.5" y="53.5" width="6" height="3.3" fill="#3a2a20"/><rect x="138" y="54.3" width="26" height="0.6" fill="#777"/><rect x="138" y="55.5" width="14" height="0.5" fill="#999"/><rect x="180" y="54.5" width="7" height="0.5" fill="#bbb"/><rect x="189" y="54.5" width="5" height="0.5" fill="#888"/><rect x="129.5" y="57.7" width="6" height="3.3" fill="#f6cdb8"/><rect x="138" y="58.5" width="33" height="0.6" fill="#777"/><rect x="138" y="59.7" width="14" height="0.5" fill="#999"/><rect x="180" y="58.7" width="7" height="0.5" fill="#bbb"/><rect x="189" y="58.7" width="5" height="0.5" fill="#888"/><rect x="129.5" y="61.9" width="6" height="3.3" fill="#333"/><rect x="138" y="62.7" width="28" height="0.6" fill="#777"/><rect x="138" y="63.9" width="14" height="0.5" fill="#999"/><rect x="180" y="62.9" width="7" height="0.5" fill="#bbb"/><rect x="189" y="62.9" width="5" height="0.5" fill="#888"/><rect x="129.5" y="66.1" width="6" height="3.3" fill="#c9b8ae"/><rect x="138" y="66.9" width="35" height="0.6" fill="#777"/><rect x="138" y="68.1" width="14" height="0.5" fill="#999"/><rect x="180" y="67.1" width="7" height="0.5" fill="#bbb"/><rect x="189" y="67.1" width="5" height="0.5" fill="#888"/><rect x="129.5" y="70.3" width="6" height="3.3" fill="#2e5a8a"/><rect x="138" y="71.1" width="30" height="0.6" fill="#777"/><rect x="138" y="72.3" width="14" height="0.5" fill="#999"/><rect x="180" y="71.3" width="7" height="0.5" fill="#bbb"/><rect x="189" y="71.3" width="5" height="0.5" fill="#888"/><rect x="124" y="73.9" width="70" height="4.2" fill="#0a78d6"/><rect x="129.5" y="74.5" width="6" height="3.3" fill="#3a2418"/><rect x="138" y="75.3" width="37" height="0.6" fill="#cfe3f7"/><rect x="138" y="76.5" width="14" height="0.5" fill="#cfe3f7"/><rect x="180" y="75.5" width="7" height="0.5" fill="#bbb"/><rect x="189" y="75.5" width="5" height="0.5" fill="#888"/><rect x="129.5" y="78.7" width="6" height="3.3" fill="#5a2a18"/><rect x="138" y="79.5" width="32" height="0.6" fill="#777"/><rect x="138" y="80.7" width="14" height="0.5" fill="#999"/><rect x="180" y="79.7" width="7" height="0.5" fill="#bbb"/><rect x="189" y="79.7" width="5" height="0.5" fill="#888"/><rect x="129.5" y="82.9" width="6" height="3.3" fill="#7a3a18"/><rect x="138" y="83.7" width="27" height="0.6" fill="#777"/><rect x="138" y="84.9" width="14" height="0.5" fill="#999"/><rect x="180" y="83.9" width="7" height="0.5" fill="#bbb"/><rect x="189" y="83.9" width="5" height="0.5" fill="#888"/></svg>
<svg style="left:260px;top:646px" width="13" height="13" viewBox="0 0 13 13"><rect x="0.5" y="0.5" width="12" height="12" fill="#fff" stroke="#333"/><path d="M2.5 6.5l2.7 2.7l5.3-5.6" fill="none" stroke="#333" stroke-width="1.1"/></svg>
</section>
</div>
<span class="t" style="left:2.40px;top:98.00px;font-size:11.5px;font-weight:bold;font-family:'DejaVu Sans', 'Liberation Sans', sans-serif;transform:scaleX(1.3169);">\\.\</span>
<span class="t" style="left:25.62px;top:98.00px;font-size:11.5px;font-weight:bold;font-family:'DejaVu Sans', 'Liberation Sans', sans-serif;transform:scaleX(0.9772);">DISPLAY1</span>
<span class="t" style="left:170.20px;top:96.00px;font-size:11.5px;font-weight:bold;font-family:'DejaVu Sans', 'Liberation Sans', sans-serif;transform:scaleX(0.9500);">SAMSUNG (2008)</span>
<span class="t" style="left:1.01px;top:115.00px;font-size:11.5px;font-weight:bold;font-family:'DejaVu Sans', 'Liberation Sans', sans-serif;color:#008000;transform:scaleX(0.9919);">1920 x 1080</span>
<span class="t" style="left:2.40px;top:306.00px;font-size:11.5px;font-weight:bold;font-family:'DejaVu Sans', 'Liberation Sans', sans-serif;transform:scaleX(1.3169);">\\.\</span>
<span class="t" style="left:25.61px;top:306.00px;font-size:11.5px;font-weight:bold;font-family:'DejaVu Sans', 'Liberation Sans', sans-serif;transform:scaleX(0.9935);">DISPLAY2</span>
<span class="t" style="left:195.44px;top:304.00px;font-size:11.5px;font-weight:bold;font-family:'DejaVu Sans', 'Liberation Sans', sans-serif;transform:scaleX(0.9640);">LG TV (2013)</span>
<span class="t" style="left:1.01px;top:323.00px;font-size:11.5px;font-weight:bold;font-family:'DejaVu Sans', 'Liberation Sans', sans-serif;color:#008000;transform:scaleX(0.9919);">1920 x 1080</span>
<span class="t" style="left:2.40px;top:514.00px;font-size:11.5px;font-weight:bold;font-family:'DejaVu Sans', 'Liberation Sans', sans-serif;transform:scaleX(1.3169);">\\.\</span>
<span class="t" style="left:25.62px;top:514.00px;font-size:11.5px;font-weight:bold;font-family:'DejaVu Sans', 'Liberation Sans', sans-serif;transform:scaleX(0.9772);">DISPLAY3</span>
<span class="t" style="left:135.03px;top:512.00px;font-size:11.5px;font-weight:bold;font-family:'DejaVu Sans', 'Liberation Sans', sans-serif;transform:scaleX(0.9708);">BenQ G2420HD (2011)</span>
<span class="t" style="left:1.01px;top:531.00px;font-size:11.5px;font-weight:bold;font-family:'DejaVu Sans', 'Liberation Sans', sans-serif;color:#008000;transform:scaleX(0.9919);">1920 x 1080</span>
<span class="t" style="left:2.40px;top:722.00px;font-size:11.5px;font-weight:bold;font-family:'DejaVu Sans', 'Liberation Sans', sans-serif;transform:scaleX(1.3169);">\\.\</span>
<span class="t" style="left:25.62px;top:722.00px;font-size:11.5px;font-weight:bold;font-family:'DejaVu Sans', 'Liberation Sans', sans-serif;transform:scaleX(0.9772);">DISPLAY4</span>
<span class="t" style="left:175.99px;top:720.00px;font-size:11.5px;font-weight:bold;font-family:'DejaVu Sans', 'Liberation Sans', sans-serif;transform:scaleX(1.0091);">U32J59x (2020)</span>
<span class="t" style="left:2.00px;top:739.00px;font-size:11.5px;font-weight:bold;font-family:'DejaVu Sans', 'Liberation Sans', sans-serif;color:#008000;transform:scaleX(0.9794);">3840 x 2160</span>
<span class="t" style="left:95.29px;top:739.00px;font-size:11.5px;font-weight:bold;font-family:'DejaVu Sans', 'Liberation Sans', sans-serif;color:#008000;transform:scaleX(0.9077);">Primary</span>
<div class="clip" style="left:0;top:843px;width:300px;height:49px">
</div>
<div class="clip" style="left:0;top:0;width:300px;height:893px;pointer-events:none"><span class="t" style="left:1.20px;top:842.00px;font-size:11px;font-weight:bold;font-family:'DejaVu Sans', 'Liberation Sans', sans-serif;font-stretch:condensed;transform:scaleX(0.9377);">[CTRL+ALT+M] - Mouse to the center of the main monitor</span>
<span class="t" style="left:17.10px;top:856.00px;font-size:11.9px;transform:scaleX(1.0233);">Restrict Mouse Movement to the Main Monitor</span>
<span class="t" style="left:17.10px;top:871.00px;font-size:11.9px;transform:scaleX(1.0203);">Only</span></div>
<div class="cb" style="left:1px;top:866px;width:13px;height:13px;"></div>
</aside>
<main>
<svg style="left:300px;top:60px" width="966" height="60" viewBox="300 60 966 60" fill="none">
<path d="M306 118.5H1266" stroke="#8a8a8a"/>
<path d="M306.6 118.5 C308.6 118.5 309.7 117.5 310.2 115 L317.4 69.5 C318 66.5 319.3 64.5 321.8 64.5 L426 64.5 C428.5 64.5 429.8 66.5 430.4 69.5 L437.6 115 C438.1 117.5 439.2 118.5 441.2 118.5" stroke="#c6c6c6"/>
<path d="M427 118.5 C429 118.5 430.1 117.5 430.6 115 L437.8 69.5 C438.4 66.5 439.7 64.5 442.2 64.5 L546.2 64.5 C548.7 64.5 550 66.5 550.6 69.5 L557.8 115 C558.3 117.5 559.4 118.5 561.4 118.5" stroke="#c6c6c6"/>
<path d="M678.3 118.5 C680.3 118.5 681.4 117.5 681.9 115 L689.1 69.5 C689.7 66.5 691 64.5 693.5 64.5 L813.4 64.5 C815.9 64.5 817.2 66.5 817.8 69.5 L825 115 C825.5 117.5 826.6 118.5 828.6 118.5" stroke="#c6c6c6"/>
<linearGradient id="tabg" x1="0" y1="0" x2="0" y2="1"><stop offset="0" stop-color="#fff"/><stop offset="1" stop-color="#f6f6f6"/></linearGradient>
<path d="M547.5 118.5 C549.5 118.5 550.6 117.5 551.1 115 L558.3 69.5 C558.9 66.5 560.2 64.5 562.7 64.5 L676.5 64.5 C679 64.5 680.3 66.5 680.9 69.5 L688.1 115 C688.6 117.5 689.7 118.5 691.7 118.5" stroke="#737373" fill="url(#tabg)"/>
<path d="M548.6 118.5H690.600" stroke="#f8f8f8" stroke-width="1.6"/>
</svg>
<section><span class="t" style="left:323.90px;top:62.00px;font-size:11.7px;color:#8b8b8b;transform:scaleX(1.0698);">\\.\</span>
<span class="t" style="left:339.30px;top:62.00px;font-size:11.7px;color:#8b8b8b;transform:scaleX(0.8018);">DISPLAY1</span>
<span class="t" style="left:324.00px;top:76.00px;font-size:11.7px;color:#8b8b8b;transform:scaleX(0.9100);">1920 x 1080</span>
<span class="t" style="left:324.00px;top:90.00px;font-size:11.7px;color:#8b8b8b;transform:scaleX(0.8937);">SAMSUNG (2008)</span></section>
<section><span class="t" style="left:444.20px;top:62.00px;font-size:11.7px;color:#8b8b8b;transform:scaleX(1.0698);">\\.\</span>
<span class="t" style="left:459.60px;top:62.00px;font-size:11.7px;color:#8b8b8b;transform:scaleX(0.7963);">DISPLAY2</span>
<span class="t" style="left:444.20px;top:76.00px;font-size:11.7px;color:#8b8b8b;transform:scaleX(0.9007);">1920 x 1080</span>
<span class="t" style="left:444.20px;top:90.00px;font-size:11.7px;color:#8b8b8b;transform:scaleX(0.8673);">LG TV (2013)</span></section>
<section><span class="t" style="left:563.70px;top:62.00px;font-size:11.7px;transform:scaleX(1.0698);">\\.\</span>
<span class="t" style="left:579.10px;top:62.00px;font-size:11.7px;transform:scaleX(0.8128);">DISPLAY3</span>
<span class="t" style="left:563.70px;top:76.00px;font-size:11.7px;transform:scaleX(0.9130);">1920 x 1080</span>
<span class="t" style="left:563.70px;top:90.00px;font-size:11.7px;transform:scaleX(0.9087);">BenQ G2420HD (2011)</span></section>
<section><span class="t" style="left:694.50px;top:62.00px;font-size:11.7px;color:#8b8b8b;transform:scaleX(1.0698);">\\.\</span>
<span class="t" style="left:709.90px;top:62.00px;font-size:11.7px;color:#8b8b8b;transform:scaleX(0.7892);">DISPLAY4</span>
<span class="t" style="left:694.50px;top:76.00px;font-size:11.7px;color:#8b8b8b;transform:scaleX(0.8992);">3840 x 2160</span>
<span class="t" style="left:694.50px;top:90.00px;font-size:11.7px;color:#8b8b8b;transform:scaleX(0.9003);">U32J59x (2020)  Primary</span></section>
<span class="t" style="left:309.40px;top:121.00px;font-size:13px;font-weight:bold;font-family:'DejaVu Sans', 'Liberation Sans', sans-serif;font-stretch:condensed;transform:scaleX(1.2120);">\\.\</span>
<span class="t" style="left:331.29px;top:121.00px;font-size:13px;font-weight:bold;font-family:'DejaVu Sans', 'Liberation Sans', sans-serif;font-stretch:condensed;transform:scaleX(0.9061);">DISPLAY3  [1920x1080] BenQ G2420HD (2011)</span>
<span class="t" style="left:310.92px;top:140.50px;font-size:12.8px;color:#6e6e6e;transform:scaleX(1.0804);">Monitor description</span>
<div style="left:625px;top:119px;width:1px;height:44px;background:#a0a0a0"></div>
<span class="t" style="left:638.40px;top:132.00px;font-size:11.7px;transform:scaleX(1.0245);">Add Image</span>
<span class="t" style="left:721.50px;top:132.00px;font-size:11.7px;transform:scaleX(0.9940);">Add Video</span>
<span class="t" style="left:822.60px;top:124.00px;font-size:11.7px;transform:scaleX(0.9820);">Delete All Images</span>
<span class="t" style="left:843.50px;top:139.00px;font-size:11.7px;transform:scaleX(0.9625);">From List</span>
<span class="t" style="left:944.60px;top:124.00px;font-size:11.7px;transform:scaleX(0.9815);">Delete All Videos</span>
<span class="t" style="left:965.10px;top:139.00px;font-size:11.7px;transform:scaleX(0.9645);">From List</span>
<article>
<div style="left:375px;top:164px;width:1px;height:20px;background:#e5e5e5"></div>
<div style="left:465px;top:164px;width:1px;height:20px;background:#e5e5e5"></div>
<div style="left:1057px;top:164px;width:1px;height:20px;background:#e5e5e5"></div>
<div style="left:1167px;top:164px;width:1px;height:20px;background:#e5e5e5"></div>
<div style="left:1247px;top:164px;width:1px;height:20px;background:#e5e5e5"></div>
<span class="t" style="left:311.89px;top:163.50px;font-size:11.7px;transform:scaleX(1.0083);">№</span>
<span class="t" style="left:382.20px;top:163.50px;font-size:11.7px;transform:scaleX(0.9685);">Preview</span>
<span class="t" style="left:472.40px;top:163.50px;font-size:11.7px;transform:scaleX(0.9655);">File</span>
<span class="t" style="left:1064.10px;top:163.50px;font-size:11.7px;transform:scaleX(0.9715);">Selected</span>
<span class="t" style="left:1218.50px;top:163.50px;font-size:11.7px;transform:scaleX(0.9840);">Date</span>
<div class="clip" style="left:306px;top:184px;width:943px;height:578px">
<div style="left:0px;top:61px;width:943px;height:1px;background:#f0f0f0"></div>
<div style="left:69px;top:0px;width:1px;height:61px;background:#f2f2f2"></div>
<div style="left:159px;top:0px;width:1px;height:61px;background:#f2f2f2"></div>
<div style="left:751px;top:0px;width:1px;height:61px;background:#f2f2f2"></div>
<div style="left:861px;top:0px;width:1px;height:61px;background:#f2f2f2"></div>
<svg style="left:71px;top:1px" width="80" height="53" viewBox="0 0 80 53" preserveAspectRatio="none"><defs><linearGradient id="cfb" x1="0" y1="0" x2="0" y2="1"><stop offset="0" stop-color="#231a15"/><stop offset="0.3" stop-color="#1e1612"/><stop offset="0.34" stop-color="#4a3526"/><stop offset="1" stop-color="#33241a"/></linearGradient><radialGradient id="cfv" cx="0.5" cy="0.55" r="0.75"><stop offset="0.4" stop-color="#000" stop-opacity="0"/><stop offset="1" stop-color="#000" stop-opacity="0.65"/></radialGradient></defs><rect width="80" height="53" fill="url(#cfb)"/><path d="M33 2c3 3-1 6 2 9c3 3 0 6 2 9M40 4c3 3 0 5 2 8" stroke="#8a8580" stroke-width="1.6" fill="none" opacity="0.6"/><ellipse cx="43" cy="38" rx="23" ry="7" fill="#d9d6d0"/><ellipse cx="43" cy="37" rx="18" ry="4.5" fill="#aaa69f"/><path d="M29 25c0 8 2 14 7 16h10c5-2 7-8 7-16z" fill="#e4e1db"/><path d="M53 26c5-2 9 0 8 4c-1 4-5 6-9 6l1-2c3 0 5-2 6-4c0-2-3-3-6-2z" fill="#d6d3cd"/><ellipse cx="41" cy="25" rx="12" ry="3.3" fill="#b9733a"/><ellipse cx="41" cy="25" rx="7" ry="1.8" fill="#e8c79a"/><ellipse cx="38" cy="41.5" rx="4" ry="1.3" fill="#3a2216"/><ellipse cx="52" cy="41" rx="3" ry="1.2" fill="#3a2216"/><rect width="80" height="53" fill="url(#cfv)"/></svg>
<svg style="left:52px;top:44px" width="16" height="17" viewBox="0 0 16 17"><rect x="4.5" y="0.5" width="11" height="15" fill="#fff" stroke="#858585"/><rect x="5.5" y="1.5" width="9" height="13" fill="none" stroke="#c9c9c9"/><rect x="0" y="4" width="16" height="9" fill="#7f9c9c"/><rect x="0" y="5" width="16" height="7" fill="#ec0000"/><text x="1.6" y="10.9" font-family="Liberation Sans, sans-serif" font-size="6.8" font-weight="bold" fill="#fff" textLength="13" lengthAdjust="spacingAndGlyphs">JPG</text></svg>
<div style="left:0px;top:123px;width:943px;height:1px;background:#f0f0f0"></div>
<div style="left:69px;top:62px;width:1px;height:61px;background:#f2f2f2"></div>
<div style="left:159px;top:62px;width:1px;height:61px;background:#f2f2f2"></div>
<div style="left:751px;top:62px;width:1px;height:61px;background:#f2f2f2"></div>
<div style="left:861px;top:62px;width:1px;height:61px;background:#f2f2f2"></div>
<svg style="left:71px;top:63px" width="60" height="60" viewBox="0 0 60 60" preserveAspectRatio="none"><rect width="60" height="60" fill="#fdd9c4"/><g fill="none" stroke="#e9776a" stroke-width="0.8"><path d="M9 21c6-5 14-5 21-8c7 3 15 3 21 8M11 25c7-4 14-3 19-6c5 3 12 2 19 6"/><path d="M8 40c7 5 15 4 22 8c7-4 15-3 22-8M12 37c7 3 13 2 18 5c5-3 11-2 18-5"/><circle cx="6" cy="32" r="2"/><circle cx="54" cy="32" r="2"/><path d="M30 9v3M30 51v3M24 46c2 2 4 2 6 0c2 2 4 2 6 0"/></g><text x="30" y="35.8" font-family="Liberation Serif, serif" font-weight="bold" font-size="10.5" fill="#4a3a6a" text-anchor="middle" textLength="37" lengthAdjust="spacingAndGlyphs">WELCOME</text><rect x="22" y="56" width="16" height="0.8" fill="#8a7a70" opacity="0.6"/></svg>
<svg style="left:52px;top:106px" width="16" height="17" viewBox="0 0 16 17"><rect x="4.5" y="0.5" width="11" height="15" fill="#fff" stroke="#858585"/><rect x="5.5" y="1.5" width="9" height="13" fill="none" stroke="#c9c9c9"/><rect x="0" y="4" width="16" height="9" fill="#7f9c9c"/><rect x="0" y="5" width="16" height="7" fill="#ec0000"/><text x="1.6" y="10.9" font-family="Liberation Sans, sans-serif" font-size="6.8" font-weight="bold" fill="#fff" textLength="13" lengthAdjust="spacingAndGlyphs">JPG</text></svg>
<div style="left:0px;top:185px;width:943px;height:1px;background:#f0f0f0"></div>
<div style="left:69px;top:124px;width:1px;height:61px;background:#f2f2f2"></div>
<div style="left:159px;top:124px;width:1px;height:61px;background:#f2f2f2"></div>
<div style="left:751px;top:124px;width:1px;height:61px;background:#f2f2f2"></div>
<div style="left:861px;top:124px;width:1px;height:61px;background:#f2f2f2"></div>
<svg style="left:71px;top:125px" width="60" height="60" viewBox="0 0 60 60" preserveAspectRatio="none"><defs><radialGradient id="w2" cx="0.5" cy="0.5" r="0.72"><stop offset="0" stop-color="#474747"/><stop offset="0.6" stop-color="#303030"/><stop offset="1" stop-color="#1c1c1c"/></radialGradient></defs><rect width="60" height="60" fill="url(#w2)"/><g fill="none" stroke="#bdbdbd" stroke-width="0.7"><path d="M15 21c4-5 12-6 17-2M9 37c8 3 18 0 26 1c7 1 13 1 20-1"/><circle cx="34" cy="39.5" r="2"/><circle cx="40" cy="40" r="1.6"/><circle cx="45.5" cy="39" r="1.3"/><circle cx="10" cy="36" r="1.5"/></g><text x="29.5" y="33.5" font-family="Liberation Serif, serif" font-weight="bold" font-size="12" fill="#dedede" text-anchor="middle" textLength="44" lengthAdjust="spacingAndGlyphs" transform="rotate(-2 30 30)">WELCOME</text><rect x="21" y="55.5" width="17" height="0.8" fill="#ccc" opacity="0.7"/></svg>
<svg style="left:52px;top:168px" width="16" height="17" viewBox="0 0 16 17"><rect x="4.5" y="0.5" width="11" height="15" fill="#fff" stroke="#858585"/><rect x="5.5" y="1.5" width="9" height="13" fill="none" stroke="#c9c9c9"/><rect x="0" y="4" width="16" height="9" fill="#7f9c9c"/><rect x="0" y="5" width="16" height="7" fill="#ec0000"/><text x="1.6" y="10.9" font-family="Liberation Sans, sans-serif" font-size="6.8" font-weight="bold" fill="#fff" textLength="13" lengthAdjust="spacingAndGlyphs">JPG</text></svg>
<div style="left:0px;top:247px;width:943px;height:1px;background:#f0f0f0"></div>
<div style="left:69px;top:186px;width:1px;height:61px;background:#f2f2f2"></div>
<div style="left:159px;top:186px;width:1px;height:61px;background:#f2f2f2"></div>
<div style="left:751px;top:186px;width:1px;height:61px;background:#f2f2f2"></div>
<div style="left:861px;top:186px;width:1px;height:61px;background:#f2f2f2"></div>
<svg style="left:71px;top:187px" width="80" height="53" viewBox="0 0 80 53" preserveAspectRatio="none"><defs><linearGradient id="o1" x1="0" y1="0" x2="1" y2="0"><stop offset="0" stop-color="#d8c7b4"/><stop offset="0.4" stop-color="#efe6da"/><stop offset="1" stop-color="#e9ddcc"/></linearGradient></defs><rect width="80" height="53" fill="url(#o1)"/><rect x="40" y="0" width="11" height="53" fill="#2b2b2d"/><path d="M0 0h14c2 6 0 12-4 18c-2 6-3 14-4 20l-6 2z" fill="#6b4a36"/><path d="M8 6c4-2 7 2 7 8c0 6-2 12-6 14c-2-6-3-14-1-22z" fill="#e6bfa6"/><path d="M0 38c8-3 18-2 24 4l10 11h-34z" fill="#d9b3b0"/><path d="M22 12l48-1l1 33l-47 1z" fill="#f3f1f3"/><path d="M40 0l-3 11M51 0l5 11" stroke="#b9a58a" stroke-width="0.8"/><text x="46" y="36" font-family="Liberation Sans, sans-serif" font-style="italic" font-size="19" fill="#7d7f8c" text-anchor="middle" textLength="35" lengthAdjust="spacingAndGlyphs" transform="translate(46 0) scale(1 1.2) translate(-46 -6)">OPEN</text><path d="M14 30c4-3 9-4 11-1c1 3-1 8-3 12l-8 2c-2-4-2-9 0-13zM70 24c3-1 7 1 9 5l1 12l-6 1c-3-5-5-12-4-18z" fill="#e8c3ab"/></svg>
<svg style="left:52px;top:230px" width="16" height="17" viewBox="0 0 16 17"><rect x="4.5" y="0.5" width="11" height="15" fill="#fff" stroke="#858585"/><rect x="5.5" y="1.5" width="9" height="13" fill="none" stroke="#c9c9c9"/><rect x="0" y="4" width="16" height="9" fill="#7f9c9c"/><rect x="0" y="5" width="16" height="7" fill="#ec0000"/><text x="1.6" y="10.9" font-family="Liberation Sans, sans-serif" font-size="6.8" font-weight="bold" fill="#fff" textLength="13" lengthAdjust="spacingAndGlyphs">JPG</text></svg>
<div style="left:0px;top:248px;width:943px;height:62px;background:#0078d7"></div>
<div style="left:751px;top:248px;width:111px;height:62px;border:1px dotted #ff9a3c"></div>
<div style="left:69px;top:248px;width:1px;height:62px;background:#dce9f5"></div>
<div style="left:159px;top:248px;width:1px;height:62px;background:#dce9f5"></div>
<svg style="left:71px;top:249px" width="80" height="53" viewBox="0 0 80 53" preserveAspectRatio="none"><defs><linearGradient id="o2" x1="0" y1="0" x2="1" y2="0"><stop offset="0" stop-color="#6a655c"/><stop offset="0.2" stop-color="#5d5a52"/><stop offset="0.27" stop-color="#2e3834"/><stop offset="1" stop-color="#38423e"/></linearGradient></defs><rect width="80" height="53" fill="url(#o2)"/><rect x="18" y="0" width="62" height="7" fill="#1d2422"/><ellipse cx="16" cy="22" rx="3.5" ry="10" fill="#c9dcd4" opacity="0.8"/><ellipse cx="67" cy="21" rx="5" ry="6" fill="#35302f"/><path d="M60 30c4-4 14-3 18 6l2 17h-22z" fill="#3b3230"/><path d="M63 40c3-3 10-2 13 3l1 10h-14z" fill="#e4e8e8"/><g fill="#f3c02e"><circle cx="10" cy="6" r="1.7"/><circle cx="12.5" cy="8.5" r="1.7"/><circle cx="21" cy="9.5" r="1.8"/><circle cx="33" cy="8.5" r="1.8"/><circle cx="29" cy="12" r="1.8"/><circle cx="19" cy="14" r="1.7"/><circle cx="23" cy="16" r="1.8"/><circle cx="27" cy="15.5" r="1.7"/></g><path d="M37 0l-6 19M44 0l8 11" stroke="#b9a27a" stroke-width="0.5"/><g transform="rotate(-15.5 45 30)"><rect x="27" y="16" width="37" height="27.5" rx="1.5" fill="#3576bd"/><rect x="28.6" y="17.6" width="33.8" height="24.3" rx="0.8" fill="none" stroke="#e4edf5" stroke-width="0.8"/><g font-family="Liberation Sans, sans-serif" fill="#e4eef4"><text x="31" y="22.6" font-size="3.8" textLength="28" lengthAdjust="spacingAndGlyphs">YES...... We are</text><text transform="translate(30.3 36) scale(1 1.25)" font-size="11.5" font-weight="bold" textLength="30" lengthAdjust="spacingAndGlyphs">OPEN</text><text x="38" y="40.3" font-size="3.2" textLength="15" lengthAdjust="spacingAndGlyphs">WELCOME</text></g></g></svg>
<svg style="left:52px;top:292px" width="16" height="17" viewBox="0 0 16 17"><rect x="4.5" y="0.5" width="11" height="15" fill="#fff" stroke="#858585"/><rect x="5.5" y="1.5" width="9" height="13" fill="none" stroke="#c9c9c9"/><rect x="0" y="4" width="16" height="9" fill="#7f9c9c"/><rect x="0" y="5" width="16" height="7" fill="#ec0000"/><text x="1.6" y="10.9" font-family="Liberation Sans, sans-serif" font-size="6.8" font-weight="bold" fill="#fff" textLength="13" lengthAdjust="spacingAndGlyphs">JPG</text></svg>
<div style="left:0px;top:371px;width:943px;height:1px;background:#f0f0f0"></div>
<div style="left:69px;top:310px;width:1px;height:61px;background:#f2f2f2"></div>
<div style="left:159px;top:310px;width:1px;height:61px;background:#f2f2f2"></div>
<div style="left:751px;top:310px;width:1px;height:61px;background:#f2f2f2"></div>
<div style="left:861px;top:310px;width:1px;height:61px;background:#f2f2f2"></div>
<svg style="left:71px;top:311px" width="80" height="53" viewBox="0 0 80 53" preserveAspectRatio="none"><defs><linearGradient id="bgb" x1="0" y1="0" x2="0" y2="1"><stop offset="0" stop-color="#15110f"/><stop offset="0.6" stop-color="#1f1814"/><stop offset="0.72" stop-color="#4a2c1c"/><stop offset="1" stop-color="#2a1a12"/></linearGradient></defs><rect width="80" height="53" fill="url(#bgb)"/><g fill="#d9b27a" opacity="0.7"><circle cx="46" cy="7" r="3"/><circle cx="63" cy="4" r="3"/><circle cx="74" cy="1" r="2.5"/><circle cx="10" cy="5" r="1.8" opacity="0.5"/><circle cx="72" cy="22" r="2.5"/></g><rect x="4" y="20" width="9" height="13" fill="#5a2a22" opacity="0.9"/><rect x="4" y="20" width="9" height="5" fill="#7a6a64" opacity="0.6"/><path d="M0 31c5-2 10 0 14 3l-2 8h-12z" fill="#b8923c"/><path d="M10 43l62-1l6 6h-70z" fill="#5e3822"/><rect x="45" y="8" width="1.2" height="8" fill="#d8c8a0"/><path d="M26 26c0-8 8-12 17-12c9 0 17 4 17 12z" fill="#c98b4b"/><path d="M30 21c3-4 8-6 13-6c5 0 9 1 12 4c-8-2-18-1-25 2z" fill="#e0a868"/><path d="M24 26h38l1 3l-40 0z" fill="#6c8f2e"/><rect x="27" y="28" width="32" height="3" rx="1.5" fill="#b62a2a"/><rect x="36" y="27.6" width="14" height="2.4" fill="#6a2a5a" opacity="0.6"/><path d="M25 31h36l-1 3l-5 2l-4-2h-26z" fill="#f2aa1c"/><path d="M27 33c4-1 9-1 13 0c4-1 12-1 18 0c2 2 1 5-2 6h-27c-3-1-4-4-2-6z" fill="#3b2518"/><path d="M13 40c4-4 10-5 14-2l-2 5h-13zM56 38c4-2 8-1 10 2l-10 2z" fill="#5f8a2c"/><path d="M26 40h34c1 3-2 5-6 5h-22c-4 0-7-2-6-5z" fill="#dcae72"/><rect x="70" y="31" width="10" height="4" fill="#6a8a3a" opacity="0.8"/><rect x="76" y="28" width="4" height="5" fill="#c83a2a"/></svg>
<svg style="left:52px;top:354px" width="16" height="17" viewBox="0 0 16 17"><rect x="4.5" y="0.5" width="11" height="15" fill="#fff" stroke="#858585"/><rect x="5.5" y="1.5" width="9" height="13" fill="none" stroke="#c9c9c9"/><rect x="0" y="4" width="16" height="9" fill="#7f9c9c"/><rect x="0" y="5" width="16" height="7" fill="#ec0000"/><text x="1.6" y="10.9" font-family="Liberation Sans, sans-serif" font-size="6.8" font-weight="bold" fill="#fff" textLength="13" lengthAdjust="spacingAndGlyphs">JPG</text></svg>
<div style="left:0px;top:433px;width:943px;height:1px;background:#f0f0f0"></div>
<div style="left:69px;top:372px;width:1px;height:61px;background:#f2f2f2"></div>
<div style="left:159px;top:372px;width:1px;height:61px;background:#f2f2f2"></div>
<div style="left:751px;top:372px;width:1px;height:61px;background:#f2f2f2"></div>
<div style="left:861px;top:372px;width:1px;height:61px;background:#f2f2f2"></div>
<svg style="left:71px;top:373px" width="80" height="53" viewBox="0 0 80 53" preserveAspectRatio="none"><rect width="80" height="53" fill="#241a16"/><path d="M58 0h22v20c-6-2-12-6-16-10c-3-3-5-7-6-10z" fill="#2e6a22"/><path d="M64 2c5 2 10 8 14 14" stroke="#4a9a34" stroke-width="3" fill="none"/><ellipse cx="13" cy="12" rx="11" ry="7" fill="#4a3020"/><ellipse cx="13" cy="9.5" rx="9.5" ry="3.5" fill="#dba83a"/><ellipse cx="56" cy="6" rx="5.5" ry="5" fill="#cdb890"/><ellipse cx="44" cy="8" rx="3.5" ry="3" fill="#a82a1e"/><rect x="23" y="0" width="3" height="9" fill="#5a3020"/><ellipse cx="74" cy="46" rx="6.5" ry="5.5" fill="#b8281a"/><ellipse cx="72.5" cy="44" rx="2.5" ry="1.8" fill="#e0604a" opacity="0.7"/><path d="M0 36c4 2 8 6 10 10l-2 7h-8z" fill="#2e5a22" opacity="0.8"/><rect x="8" y="42" width="14" height="11" fill="#5a4030" opacity="0.8"/><path d="M3 26c2-3 6-3 8 0M69 19c4-2 8 0 9 4" stroke="#111" stroke-width="3" fill="none"/><path d="M8 24c2 14 10 24 32 24c22 0 32-10 34-24z" fill="#141414"/><ellipse cx="41" cy="24" rx="33" ry="13.5" fill="#1c1c1c"/><ellipse cx="41" cy="25.5" rx="29.5" ry="11" fill="#b53f17"/><g fill="#6e2c14"><ellipse cx="28" cy="28" rx="6" ry="3.5"/><ellipse cx="45" cy="29" rx="7" ry="4"/><ellipse cx="57" cy="24" rx="5" ry="3"/><ellipse cx="37" cy="21" rx="5" ry="2.5"/><ellipse cx="55" cy="31" rx="4" ry="2.5"/></g><g fill="#e8962a"><rect x="14" y="23" width="7" height="3.5" rx="1"/><rect x="56" y="33" width="6" height="4" rx="1"/><rect x="62" y="22" width="6" height="3" rx="1"/><rect x="32" y="34" width="7" height="3" rx="1"/></g><path d="M33 23c3-4 8-5 12-3c-1 3-4 5-7 5c-2 1-4 0-5-2z" fill="#2f7a2a"/></svg>
<svg style="left:52px;top:416px" width="16" height="17" viewBox="0 0 16 17"><rect x="4.5" y="0.5" width="11" height="15" fill="#fff" stroke="#858585"/><rect x="5.5" y="1.5" width="9" height="13" fill="none" stroke="#c9c9c9"/><rect x="0" y="4" width="16" height="9" fill="#7f9c9c"/><rect x="0" y="5" width="16" height="7" fill="#ec0000"/><text x="1.6" y="10.9" font-family="Liberation Sans, sans-serif" font-size="6.8" font-weight="bold" fill="#fff" textLength="13" lengthAdjust="spacingAndGlyphs">JPG</text></svg>
<div style="left:0px;top:495px;width:943px;height:1px;background:#f0f0f0"></div>
<div style="left:69px;top:434px;width:1px;height:61px;background:#f2f2f2"></div>
<div style="left:159px;top:434px;width:1px;height:61px;background:#f2f2f2"></div>
<div style="left:751px;top:434px;width:1px;height:61px;background:#f2f2f2"></div>
<div style="left:861px;top:434px;width:1px;height:61px;background:#f2f2f2"></div>
<svg style="left:71px;top:435px" width="79" height="60" viewBox="0 0 79 60" preserveAspectRatio="none"><rect width="79" height="60" fill="#5e3220"/><rect x="0" y="0" width="79" height="8" fill="#4a2618"/><path d="M1 12c6-6 16-6 24-4c6 0 12-2 16-1l-6 5c-6 2-10 6-16 6c-8 0-14-2-18-6z" fill="#4f8a34"/><path d="M28 4c4 3 8 5 12 5" stroke="#3f7a2a" stroke-width="1.5" fill="none"/><path d="M34 5c8 1 18 0 24-3c-5 4-15 6-24 3z" fill="#d81e1a"/><ellipse cx="9" cy="21" rx="11" ry="7" fill="#d9d4cc"/><ellipse cx="8" cy="20" rx="9.5" ry="5.5" fill="#f3f0ea"/><ellipse cx="51" cy="15" rx="14" ry="7" fill="#1a1614"/><ellipse cx="51" cy="14.5" rx="12" ry="5" fill="#e8901e"/><ellipse cx="51" cy="14" rx="4" ry="2" fill="#c0402a"/><path d="M66 0h13v30c-5 0-9-1-11-3c-3-6-4-18-2-27z" fill="#8a4a28"/><rect x="64" y="8" width="15" height="2" fill="#5e2e18"/><rect x="65" y="16" width="14" height="2" fill="#5e2e18"/><ellipse cx="73" cy="1" rx="7" ry="3" fill="#9a5a34"/><ellipse cx="37" cy="52" rx="31" ry="12" fill="#cdb888"/><ellipse cx="37" cy="52" rx="24" ry="8" fill="#e8e0d0"/><ellipse cx="2" cy="42" rx="4.5" ry="5" fill="#d81e1a"/><path d="M3 33c2-4 7-4 9-1M68 39c4-2 8 0 9 3" stroke="#151515" stroke-width="3.2" fill="none"/><path d="M10 33c1 14 8 22 28 22c20 0 28-8 30-21z" fill="#161616"/><ellipse cx="39" cy="33" rx="29.5" ry="14" fill="#1e1e1e"/><ellipse cx="39" cy="34" rx="26" ry="11.5" fill="#f0971a"/><g fill="#f6d87a"><ellipse cx="32" cy="36" rx="6" ry="3"/><ellipse cx="49" cy="33" rx="4.5" ry="3"/><ellipse cx="41" cy="41" rx="4" ry="2.2"/><ellipse cx="20" cy="37" rx="3" ry="1.6"/><ellipse cx="56" cy="38" rx="3.5" ry="2"/></g><path d="M35 29c3-2 8-2 10 1c-2 3-7 3-10-1z" fill="#3a8a2e"/><g fill="#d8381e"><circle cx="27" cy="30" r="1"/><circle cx="52" cy="41" r="1.2"/><circle cx="45" cy="27" r="0.9"/></g></svg>
<svg style="left:52px;top:478px" width="16" height="17" viewBox="0 0 16 17"><rect x="4.5" y="0.5" width="11" height="15" fill="#fff" stroke="#858585"/><rect x="5.5" y="1.5" width="9" height="13" fill="none" stroke="#c9c9c9"/><rect x="0" y="4" width="16" height="9" fill="#7f9c9c"/><rect x="0" y="5" width="16" height="7" fill="#ec0000"/><text x="1.6" y="10.9" font-family="Liberation Sans, sans-serif" font-size="6.8" font-weight="bold" fill="#fff" textLength="13" lengthAdjust="spacingAndGlyphs">JPG</text></svg>
<div style="left:0px;top:557px;width:943px;height:1px;background:#f0f0f0"></div>
<div style="left:69px;top:496px;width:1px;height:61px;background:#f2f2f2"></div>
<div style="left:159px;top:496px;width:1px;height:61px;background:#f2f2f2"></div>
<div style="left:751px;top:496px;width:1px;height:61px;background:#f2f2f2"></div>
<div style="left:861px;top:496px;width:1px;height:61px;background:#f2f2f2"></div>
<svg style="left:71px;top:497px" width="80" height="53" viewBox="0 0 80 53" preserveAspectRatio="none"><defs><linearGradient id="stb" x1="0" y1="0" x2="1" y2="1"><stop offset="0" stop-color="#8a4a1e"/><stop offset="1" stop-color="#9a5a26"/></linearGradient></defs><rect width="80" height="53" fill="url(#stb)"/><path d="M0 16c8-6 20-8 34-8l22-8h8l16 12v32l-14 9h-62l-4-6z" fill="#c98f3e"/><path d="M4 20c8-5 20-7 32-7l20-6l20 12v22l-14 10h-52z" fill="#d7a04c"/><path d="M2 34c2 6 4 12 8 19M54 8c8 2 18 6 24 12" stroke="#a26a26" stroke-width="0.8" fill="none"/><path d="M22 0h34l-4 7l-12 3l-12-4z" fill="#4a4448"/><path d="M28 0l14 9M50 0l-10 9" stroke="#6a6468" stroke-width="1.2"/><path d="M61 0h19v7c-6 1-14 0-17-2z" fill="#8a8a86"/><ellipse cx="21" cy="13" rx="5" ry="2.5" fill="#8a5a2a" opacity="0.7"/><path d="M4 31c0-5 5-9 11-9c4 0 7 2 7 6c0 6-3 11-8 12c-5 1-10-3-10-9z" fill="#e2bb6c"/><path d="M6 34c2 4 6 6 10 5" stroke="#b8863a" stroke-width="1.2" fill="none"/><g fill="#d83a24"><rect x="45" y="14" width="8" height="4" rx="1.5" transform="rotate(25 49 16)"/><rect x="56" y="15" width="9" height="4" rx="1.5" transform="rotate(-20 60 17)"/><rect x="64" y="14" width="7" height="3.5" rx="1.5"/><rect x="52" y="19" width="7" height="4" rx="1.5"/></g><g fill="#f0a428"><rect x="52" y="10" width="8" height="3" rx="1.5" transform="rotate(30 56 11)"/><rect x="58" y="27" width="8" height="3" rx="1.5" transform="rotate(-25 62 28)"/><rect x="66" y="12" width="3" height="8" rx="1.5" transform="rotate(15 67 16)"/></g><path d="M55 22c5-1 10-1 14 0M56 26c4-1 9-1 13-1" stroke="#6a8a34" stroke-width="1.6" fill="none"/><ellipse cx="46" cy="25" rx="13" ry="9" fill="#6a3a26" transform="rotate(25 46 25)"/><ellipse cx="44" cy="21" rx="7" ry="3.5" fill="#9a6a54" opacity="0.6" transform="rotate(20 44 21)"/><ellipse cx="34" cy="35" rx="13" ry="9" fill="#5e3222" transform="rotate(25 34 35)"/><g stroke="#3e2016" stroke-width="0.9"><path d="M26 31l14 10M30 28l14 10M24 35l12 9M40 18l14 10M37 22l14 10"/></g><path d="M42 22c-1 4-3 8-4 11" stroke="#6a8a3a" stroke-width="1.2" fill="none"/></svg>
<svg style="left:52px;top:540px" width="16" height="17" viewBox="0 0 16 17"><rect x="4.5" y="0.5" width="11" height="15" fill="#fff" stroke="#858585"/><rect x="5.5" y="1.5" width="9" height="13" fill="none" stroke="#c9c9c9"/><rect x="0" y="4" width="16" height="9" fill="#7f9c9c"/><rect x="0" y="5" width="16" height="7" fill="#ec0000"/><text x="1.6" y="10.9" font-family="Liberation Sans, sans-serif" font-size="6.8" font-weight="bold" fill="#fff" textLength="13" lengthAdjust="spacingAndGlyphs">JPG</text></svg>
<div style="left:0px;top:619px;width:943px;height:1px;background:#f0f0f0"></div>
<div style="left:69px;top:558px;width:1px;height:61px;background:#f2f2f2"></div>
<div style="left:159px;top:558px;width:1px;height:61px;background:#f2f2f2"></div>
<div style="left:751px;top:558px;width:1px;height:61px;background:#f2f2f2"></div>
<div style="left:861px;top:558px;width:1px;height:61px;background:#f2f2f2"></div>
<svg style="left:71px;top:559px" width="80" height="53" viewBox="0 0 80 53" preserveAspectRatio="none"><rect width="80" height="53" fill="#0c0c0c"/><path d="M8 5h72v48h-74z" fill="#2a1e18"/><path d="M20 20c10-4 30-6 44-4l16 4v33h-66z" fill="#7a4a22"/><path d="M34 8c8-3 18-3 24 1c3 3 2 8-2 10c-8 3-18 3-24 0c-3-3-2-8 2-11z" fill="#c8862a"/><path d="M42 7c5-1 10 0 14 2l-2 4c-4-1-8-1-12 0z" fill="#e8b23a"/><path d="M28 14c6 2 20 3 30 1c3 3 1 6-3 7c-9 2-20 1-26-2c-3-2-3-4-1-6z" fill="#6e3a1c"/><path d="M12 10c6-3 14-4 24-3c-4 2-6 4-12 5c-4 1-8 0-12-2zM32 15c6-2 12-2 18-1c-5 2-12 3-18 1zM25 6l3 6M52 5l2 8" fill="#3f8a2c" stroke="#3f8a2c" stroke-width="0.8"/><ellipse cx="67" cy="19" rx="5.5" ry="4" fill="#c82a1a"/><ellipse cx="66" cy="17.5" rx="2" ry="1" fill="#f08a6a"/></svg>
<svg style="left:52px;top:602px" width="16" height="17" viewBox="0 0 16 17"><rect x="4.5" y="0.5" width="11" height="15" fill="#fff" stroke="#858585"/><rect x="5.5" y="1.5" width="9" height="13" fill="none" stroke="#c9c9c9"/><rect x="0" y="4" width="16" height="9" fill="#7f9c9c"/><rect x="0" y="5" width="16" height="7" fill="#ec0000"/><text x="1.6" y="10.9" font-family="Liberation Sans, sans-serif" font-size="6.8" font-weight="bold" fill="#fff" textLength="13" lengthAdjust="spacingAndGlyphs">JPG</text></svg>
</div>
<div class="clip" style="left:0;top:184px;width:1249px;height:578px">
<section><span class="t" style="left:314.40px;margin-top:-184px;top:205.00px;font-size:11.7px;transform:scaleX(0.8800);">2</span>
<span class="t" style="left:474.50px;margin-top:-184px;top:197.00px;font-size:11.7px;transform:scaleX(1.0060);">P:\Tablo-Screen\Images\Coffee\ai-generated-8689531_1920.jpg</span>
<span class="t" style="left:474.50px;margin-top:-184px;top:212.00px;font-size:11.7px;transform:scaleX(0.9161);">1920 x 1280</span>
<span class="t" style="left:549.70px;margin-top:-184px;top:212.00px;font-size:11.7px;transform:scaleX(0.9825);">[2,46 MP]</span>
<span class="t" style="left:613.80px;margin-top:-184px;top:212.00px;font-size:11.7px;transform:scaleX(0.9029);">321 KB</span>
<span class="t" style="left:1073.90px;margin-top:-184px;top:197.00px;font-size:11.7px;color:#c3c3c3;transform:scaleX(0.9949);">Selected Image</span>
<span class="t" style="left:1090.90px;margin-top:-184px;top:212.00px;font-size:11.7px;color:#c3c3c3;transform:scaleX(1.0047);">for Show</span>
<span class="t" style="left:1189.00px;margin-top:-184px;top:197.00px;font-size:11.7px;transform:scaleX(0.9153);">05.05.2024</span>
<span class="t" style="left:1201.50px;margin-top:-184px;top:212.00px;font-size:11.7px;transform:scaleX(0.9023);">13:59:30</span></section>
<section><span class="t" style="left:314.40px;margin-top:-184px;top:267.00px;font-size:11.7px;transform:scaleX(0.8800);">3</span>
<span class="t" style="left:474.50px;margin-top:-184px;top:259.00px;font-size:11.7px;transform:scaleX(1.0034);">P:\Tablo-Screen\Images\Wellcome\403970-PDYIEZ-251.jpg</span>
<span class="t" style="left:474.50px;margin-top:-184px;top:274.00px;font-size:11.7px;transform:scaleX(0.9161);">2000 x 2000</span>
<span class="t" style="left:549.70px;margin-top:-184px;top:274.00px;font-size:11.7px;transform:scaleX(0.9825);">[4,00 MP]</span>
<span class="t" style="left:613.80px;margin-top:-184px;top:274.00px;font-size:11.7px;transform:scaleX(0.9029);">426 KB</span>
<span class="t" style="left:1073.90px;margin-top:-184px;top:259.00px;font-size:11.7px;color:#c3c3c3;transform:scaleX(0.9949);">Selected Image</span>
<span class="t" style="left:1090.90px;margin-top:-184px;top:274.00px;font-size:11.7px;color:#c3c3c3;transform:scaleX(1.0047);">for Show</span>
<span class="t" style="left:1189.00px;margin-top:-184px;top:259.00px;font-size:11.7px;transform:scaleX(0.9311);">24.08.2018</span>
<span class="t" style="left:1201.50px;margin-top:-184px;top:274.00px;font-size:11.7px;transform:scaleX(0.9223);">10:32:58</span></section>
<section><span class="t" style="left:314.40px;margin-top:-184px;top:329.00px;font-size:11.7px;transform:scaleX(0.8800);">4</span>
<span class="t" style="left:474.50px;margin-top:-184px;top:321.00px;font-size:11.7px;transform:scaleX(1.0093);">P:\Tablo-Screen\Images\Wellcome\403971-PDLODW-393.jpg</span>
<span class="t" style="left:474.50px;margin-top:-184px;top:336.00px;font-size:11.7px;transform:scaleX(0.9161);">2000 x 2000</span>
<span class="t" style="left:549.70px;margin-top:-184px;top:336.00px;font-size:11.7px;transform:scaleX(0.9825);">[4,00 MP]</span>
<span class="t" style="left:613.80px;margin-top:-184px;top:336.00px;font-size:11.7px;transform:scaleX(0.9029);">297 KB</span>
<span class="t" style="left:1073.90px;margin-top:-184px;top:321.00px;font-size:11.7px;color:#c3c3c3;transform:scaleX(0.9949);">Selected Image</span>
<span class="t" style="left:1090.90px;margin-top:-184px;top:336.00px;font-size:11.7px;color:#c3c3c3;transform:scaleX(1.0047);">for Show</span>
<span class="t" style="left:1189.00px;margin-top:-184px;top:321.00px;font-size:11.7px;transform:scaleX(0.9311);">17.08.2018</span>
<span class="t" style="left:1201.50px;margin-top:-184px;top:336.00px;font-size:11.7px;transform:scaleX(0.9223);">12:13:06</span></section>
<section><span class="t" style="left:314.40px;margin-top:-184px;top:391.00px;font-size:11.7px;transform:scaleX(0.8800);">5</span>
<span class="t" style="left:474.50px;margin-top:-184px;top:383.00px;font-size:11.7px;transform:scaleX(1.0519);">P:\Tablo-Screen\Images\Wellcome\front-view-open-sign-concept.jpg</span>
<span class="t" style="left:474.50px;margin-top:-184px;top:398.00px;font-size:11.7px;transform:scaleX(0.9305);">7054 x 4708</span>
<span class="t" style="left:549.70px;margin-top:-184px;top:398.00px;font-size:11.7px;transform:scaleX(0.9649);">[33,21 MP]</span>
<span class="t" style="left:619.80px;margin-top:-184px;top:398.00px;font-size:11.7px;transform:scaleX(0.9029);">1 889 KB</span>
<span class="t" style="left:1073.90px;margin-top:-184px;top:383.00px;font-size:11.7px;color:#c3c3c3;transform:scaleX(0.9949);">Selected Image</span>
<span class="t" style="left:1090.90px;margin-top:-184px;top:398.00px;font-size:11.7px;color:#c3c3c3;transform:scaleX(1.0047);">for Show</span>
<span class="t" style="left:1189.00px;margin-top:-184px;top:383.00px;font-size:11.7px;transform:scaleX(0.9153);">01.12.2024</span>
<span class="t" style="left:1201.50px;margin-top:-184px;top:398.00px;font-size:11.7px;transform:scaleX(0.9223);">23:06:01</span></section>
<section><span class="t" style="left:314.40px;margin-top:-184px;top:453.00px;font-size:11.7px;font-weight:bold;color:#fff;transform:scaleX(0.9200);">6</span>
<span class="t" style="left:474.50px;margin-top:-184px;top:445.00px;font-size:11.7px;font-weight:bold;color:#fff;transform:scaleX(1.0181);">P:\Tablo-Screen\Images\Wellcome\open-sign-broad-through-glass-window-coffee-shop.jpg</span>
<span class="t" style="left:474.50px;margin-top:-184px;top:460.00px;font-size:11.7px;font-weight:bold;color:#fff;transform:scaleX(1.0367);">6048 x 4024</span>
<span class="t" style="left:558.80px;margin-top:-184px;top:460.00px;font-size:11.7px;font-weight:bold;color:#fff;transform:scaleX(1.0152);">[24,34 MP]</span>
<span class="t" style="left:634.40px;margin-top:-184px;top:460.00px;font-size:11.7px;font-weight:bold;color:#fff;transform:scaleX(1.0329);">11,1 MB</span>
<span class="t" style="left:1070.70px;margin-top:-184px;top:445.00px;font-size:11.7px;font-weight:bold;color:#fff;transform:scaleX(1.0234);">Selected Image</span>
<span class="t" style="left:1089.30px;margin-top:-184px;top:460.00px;font-size:11.7px;font-weight:bold;color:#fff;transform:scaleX(0.9961);">for Show</span>
<span class="t" style="left:1181.40px;margin-top:-184px;top:445.00px;font-size:11.7px;font-weight:bold;color:#fff;transform:scaleX(1.0374);">01.12.2024</span>
<span class="t" style="left:1195.50px;margin-top:-184px;top:460.00px;font-size:11.7px;font-weight:bold;color:#fff;transform:scaleX(0.9961);">23:04:50</span></section>
<section><span class="t" style="left:314.40px;margin-top:-184px;top:515.00px;font-size:11.7px;transform:scaleX(0.8800);">7</span>
<span class="t" style="left:474.50px;margin-top:-184px;top:507.00px;font-size:11.7px;transform:scaleX(1.0033);">P:\Tablo-Screen\Images\Food\ai-generated-8271284_1920.jpg</span>
<span class="t" style="left:474.50px;margin-top:-184px;top:522.00px;font-size:11.7px;transform:scaleX(0.9161);">1920 x 1280</span>
<span class="t" style="left:549.70px;margin-top:-184px;top:522.00px;font-size:11.7px;transform:scaleX(0.9825);">[2,46 MP]</span>
<span class="t" style="left:613.80px;margin-top:-184px;top:522.00px;font-size:11.7px;transform:scaleX(0.9029);">378 KB</span>
<span class="t" style="left:1073.90px;margin-top:-184px;top:507.00px;font-size:11.7px;color:#c3c3c3;transform:scaleX(0.9949);">Selected Image</span>
<span class="t" style="left:1090.90px;margin-top:-184px;top:522.00px;font-size:11.7px;color:#c3c3c3;transform:scaleX(1.0047);">for Show</span>
<span class="t" style="left:1189.00px;margin-top:-184px;top:507.00px;font-size:11.7px;transform:scaleX(0.9153);">26.04.2024</span>
<span class="t" style="left:1201.50px;margin-top:-184px;top:522.00px;font-size:11.7px;transform:scaleX(0.9023);">18:51:14</span></section>
<section><span class="t" style="left:314.40px;margin-top:-184px;top:577.00px;font-size:11.7px;transform:scaleX(0.8800);">8</span>
<span class="t" style="left:474.50px;margin-top:-184px;top:569.00px;font-size:11.7px;transform:scaleX(1.0033);">P:\Tablo-Screen\Images\Food\ai-generated-8317423_1920.jpg</span>
<span class="t" style="left:474.50px;margin-top:-184px;top:584.00px;font-size:11.7px;transform:scaleX(0.9161);">1920 x 1280</span>
<span class="t" style="left:549.70px;margin-top:-184px;top:584.00px;font-size:11.7px;transform:scaleX(0.9825);">[2,46 MP]</span>
<span class="t" style="left:613.80px;margin-top:-184px;top:584.00px;font-size:11.7px;transform:scaleX(0.9029);">405 KB</span>
<span class="t" style="left:1073.90px;margin-top:-184px;top:569.00px;font-size:11.7px;color:#c3c3c3;transform:scaleX(0.9949);">Selected Image</span>
<span class="t" style="left:1090.90px;margin-top:-184px;top:584.00px;font-size:11.7px;color:#c3c3c3;transform:scaleX(1.0047);">for Show</span>
<span class="t" style="left:1189.00px;margin-top:-184px;top:569.00px;font-size:11.7px;transform:scaleX(0.9153);">05.05.2024</span>
<span class="t" style="left:1201.50px;margin-top:-184px;top:584.00px;font-size:11.7px;transform:scaleX(0.9023);">13:46:55</span></section>
<section><span class="t" style="left:314.40px;margin-top:-184px;top:639.00px;font-size:11.7px;transform:scaleX(0.8800);">9</span>
<span class="t" style="left:474.50px;margin-top:-184px;top:631.00px;font-size:11.7px;transform:scaleX(1.0033);">P:\Tablo-Screen\Images\Food\ai-generated-8318047_1920.jpg</span>
<span class="t" style="left:474.50px;margin-top:-184px;top:646.00px;font-size:11.7px;transform:scaleX(0.9305);">1920 x 1446</span>
<span class="t" style="left:549.70px;margin-top:-184px;top:646.00px;font-size:11.7px;transform:scaleX(0.9825);">[2,78 MP]</span>
<span class="t" style="left:613.80px;margin-top:-184px;top:646.00px;font-size:11.7px;transform:scaleX(0.9029);">551 KB</span>
<span class="t" style="left:1073.90px;margin-top:-184px;top:631.00px;font-size:11.7px;color:#c3c3c3;transform:scaleX(0.9949);">Selected Image</span>
<span class="t" style="left:1090.90px;margin-top:-184px;top:646.00px;font-size:11.7px;color:#c3c3c3;transform:scaleX(1.0047);">for Show</span>
<span class="t" style="left:1189.00px;margin-top:-184px;top:631.00px;font-size:11.7px;transform:scaleX(0.9153);">05.05.2024</span>
<span class="t" style="left:1201.50px;margin-top:-184px;top:646.00px;font-size:11.7px;transform:scaleX(0.9223);">13:48:17</span></section>
<section><span class="t" style="left:314.40px;margin-top:-184px;top:701.00px;font-size:11.7px;transform:scaleX(0.8800);">10</span>
<span class="t" style="left:474.50px;margin-top:-184px;top:693.00px;font-size:11.7px;transform:scaleX(1.0080);">P:\Tablo-Screen\Images\Food\food-3676796_1920.jpg</span>
<span class="t" style="left:474.50px;margin-top:-184px;top:708.00px;font-size:11.7px;transform:scaleX(0.9161);">1920 x 1280</span>
<span class="t" style="left:549.70px;margin-top:-184px;top:708.00px;font-size:11.7px;transform:scaleX(0.9825);">[2,46 MP]</span>
<span class="t" style="left:613.80px;margin-top:-184px;top:708.00px;font-size:11.7px;transform:scaleX(0.9029);">888 KB</span>
<span class="t" style="left:1073.90px;margin-top:-184px;top:693.00px;font-size:11.7px;color:#c3c3c3;transform:scaleX(0.9949);">Selected Image</span>
<span class="t" style="left:1090.90px;margin-top:-184px;top:708.00px;font-size:11.7px;color:#c3c3c3;transform:scaleX(1.0047);">for Show</span>
<span class="t" style="left:1189.00px;margin-top:-184px;top:693.00px;font-size:11.7px;transform:scaleX(0.9290);">28.11.2024</span>
<span class="t" style="left:1201.50px;margin-top:-184px;top:708.00px;font-size:11.7px;transform:scaleX(0.9223);">01:23:06</span></section>
<section><span class="t" style="left:314.40px;margin-top:-184px;top:763.00px;font-size:11.7px;transform:scaleX(0.8800);">11</span>
<span class="t" style="left:474.50px;margin-top:-184px;top:755.00px;font-size:11.7px;transform:scaleX(0.9627);">P:\Tablo-Screen\Images\Food\grilled-8843380_1920.jpg</span>
<span class="t" style="left:474.50px;margin-top:-184px;top:770.00px;font-size:11.7px;transform:scaleX(0.9161);">1920 x 1280</span>
<span class="t" style="left:549.70px;margin-top:-184px;top:770.00px;font-size:11.7px;transform:scaleX(0.9825);">[2,46 MP]</span>
<span class="t" style="left:613.80px;margin-top:-184px;top:770.00px;font-size:11.7px;transform:scaleX(0.9029);">412 KB</span>
<span class="t" style="left:1073.90px;margin-top:-184px;top:755.00px;font-size:11.7px;color:#c3c3c3;transform:scaleX(0.9949);">Selected Image</span>
<span class="t" style="left:1090.90px;margin-top:-184px;top:770.00px;font-size:11.7px;color:#c3c3c3;transform:scaleX(1.0047);">for Show</span>
<span class="t" style="left:1189.00px;margin-top:-184px;top:755.00px;font-size:11.7px;transform:scaleX(0.9153);">05.05.2024</span>
<span class="t" style="left:1201.50px;margin-top:-184px;top:770.00px;font-size:11.7px;transform:scaleX(0.9223);">13:50:02</span></section>
</div>
<div style="left:1249px;top:184px;width:15px;height:578px;background:#f0f0f0"></div>
<div style="left:1249px;top:231px;width:15px;height:282px;background:#cdcdcd"></div>
<svg style="left:1249px;top:184px" width="15" height="17" viewBox="1249 184 15 17"><path d="M1253.5 195.3l3-3.200l3 3.200" fill="none" stroke="#555" stroke-width="1.9"/></svg>
<svg style="left:1249px;top:745px" width="15" height="17" viewBox="1249 745 15 17"><path d="M1253.5 751.800l3 3.200l3-3.200" fill="none" stroke="#555" stroke-width="1.9"/></svg>
</article>
<footer>
<div style="left:306px;top:762px;width:959px;height:130px;background:#fff"></div>
<div style="left:458px;top:765px;width:215px;height:29px;background:#cce8ff;border:1px solid #99d1ff"></div>
<div style="left:602px;top:831px;width:120px;height:23px;background:#fff;border:1px solid #7a7a7a"></div>
<svg style="left:686px;top:835px" width="34" height="14" viewBox="686 835 34 14" fill="none" stroke="#000" stroke-width="1.35"><path d="M690.2 844.4l4.3-4.3l4.3 4.3"/><path d="M707.2 840.5l4.3 4.3l4.3-4.3"/></svg>
<span class="t" style="left:345.60px;top:770.50px;font-size:11.7px;transform:scaleX(0.9729);">Show Desktop</span>
<span class="t" style="left:515.90px;top:770.50px;font-size:11.7px;transform:scaleX(0.9855);">Selected Image File</span>
<span class="t" style="left:720.20px;top:770.50px;font-size:11.7px;transform:scaleX(0.9781);">Selected Video File</span>
<span class="t" style="left:334.50px;top:802.50px;font-size:11.7px;transform:scaleX(0.9609);">Show Black Screen</span>
<span class="t" style="left:502.60px;top:802.50px;font-size:11.7px;transform:scaleX(1.0050);">All Image Files (by loop)</span>
<span class="t" style="left:707.40px;top:802.50px;font-size:11.7px;transform:scaleX(1.0027);">All Video Files (by loop)</span>
<span class="t" style="left:310.60px;top:831.50px;font-size:11.7px;transform:scaleX(0.9794);">Pause (for Images Loop), sec:</span>
<span class="t" style="left:605.20px;top:831.50px;font-size:11.7px;transform:scaleX(0.8518);">10</span>
<div style="left:869px;top:782px;width:391px;height:23px;background:#e1e1e1;border:1px solid #adadad"></div>
<svg style="left:1244px;top:788px" width="14" height="10" viewBox="1244 788 14 10" fill="none" stroke="#444" stroke-width="1.1"><path d="M1246.900 791.600l4.100 4.100l4.100-4.100"/></svg>
<span class="t" style="left:869.60px;top:762.00px;font-size:11.7px;transform:scaleX(1.0358);">Audio Out (for video):</span>
<span class="t" style="left:872.80px;top:783.50px;font-size:11.7px;transform:scaleX(1.0208);">Autoselect device</span>
<span class="t" style="left:869.60px;top:809.00px;font-size:11.7px;transform:scaleX(0.9159);">Speed:</span>
<span class="t" style="left:942.10px;top:810.00px;font-size:11.7px;transform:scaleX(0.9217);">x0.2</span>
<span class="t" style="left:974.10px;top:810.00px;font-size:11.7px;transform:scaleX(0.8809);">x0.5</span>
<span class="t" style="left:1006.10px;top:810.00px;font-size:11.7px;transform:scaleX(0.8809);">x1.0</span>
<span class="t" style="left:1038.10px;top:810.00px;font-size:11.7px;transform:scaleX(0.9217);">x1.2</span>
<span class="t" style="left:1070.10px;top:810.00px;font-size:11.7px;transform:scaleX(0.8809);">x1.5</span>
<span class="t" style="left:1102.10px;top:810.00px;font-size:11.7px;transform:scaleX(0.9217);">x1.7</span>
<span class="t" style="left:1134.10px;top:810.00px;font-size:11.7px;transform:scaleX(0.8809);">x2.0</span>
<span class="t" style="left:1166.10px;top:810.00px;font-size:11.7px;transform:scaleX(0.8809);">x3.0</span>
<span class="t" style="left:869.60px;top:834.50px;font-size:11.7px;transform:scaleX(0.9590);">Rotate:</span>
<span class="t" style="left:1011.40px;top:836.00px;font-size:11.7px;transform:scaleX(0.8571);">0°</span>
<span class="t" style="left:1040.20px;top:836.00px;font-size:11.7px;transform:scaleX(0.9471);">90°</span>
<span class="t" style="left:1070.00px;top:836.00px;font-size:11.7px;transform:scaleX(0.8936);">180°</span>
<span class="t" style="left:1101.20px;top:836.00px;font-size:11.7px;transform:scaleX(0.8979);">270°</span>
</footer>
</main>
<div style="left:0px;top:0px;width:1266px;height:893px;border:1px solid #5a5a5a;pointer-events:none"></div>
</body></html>
